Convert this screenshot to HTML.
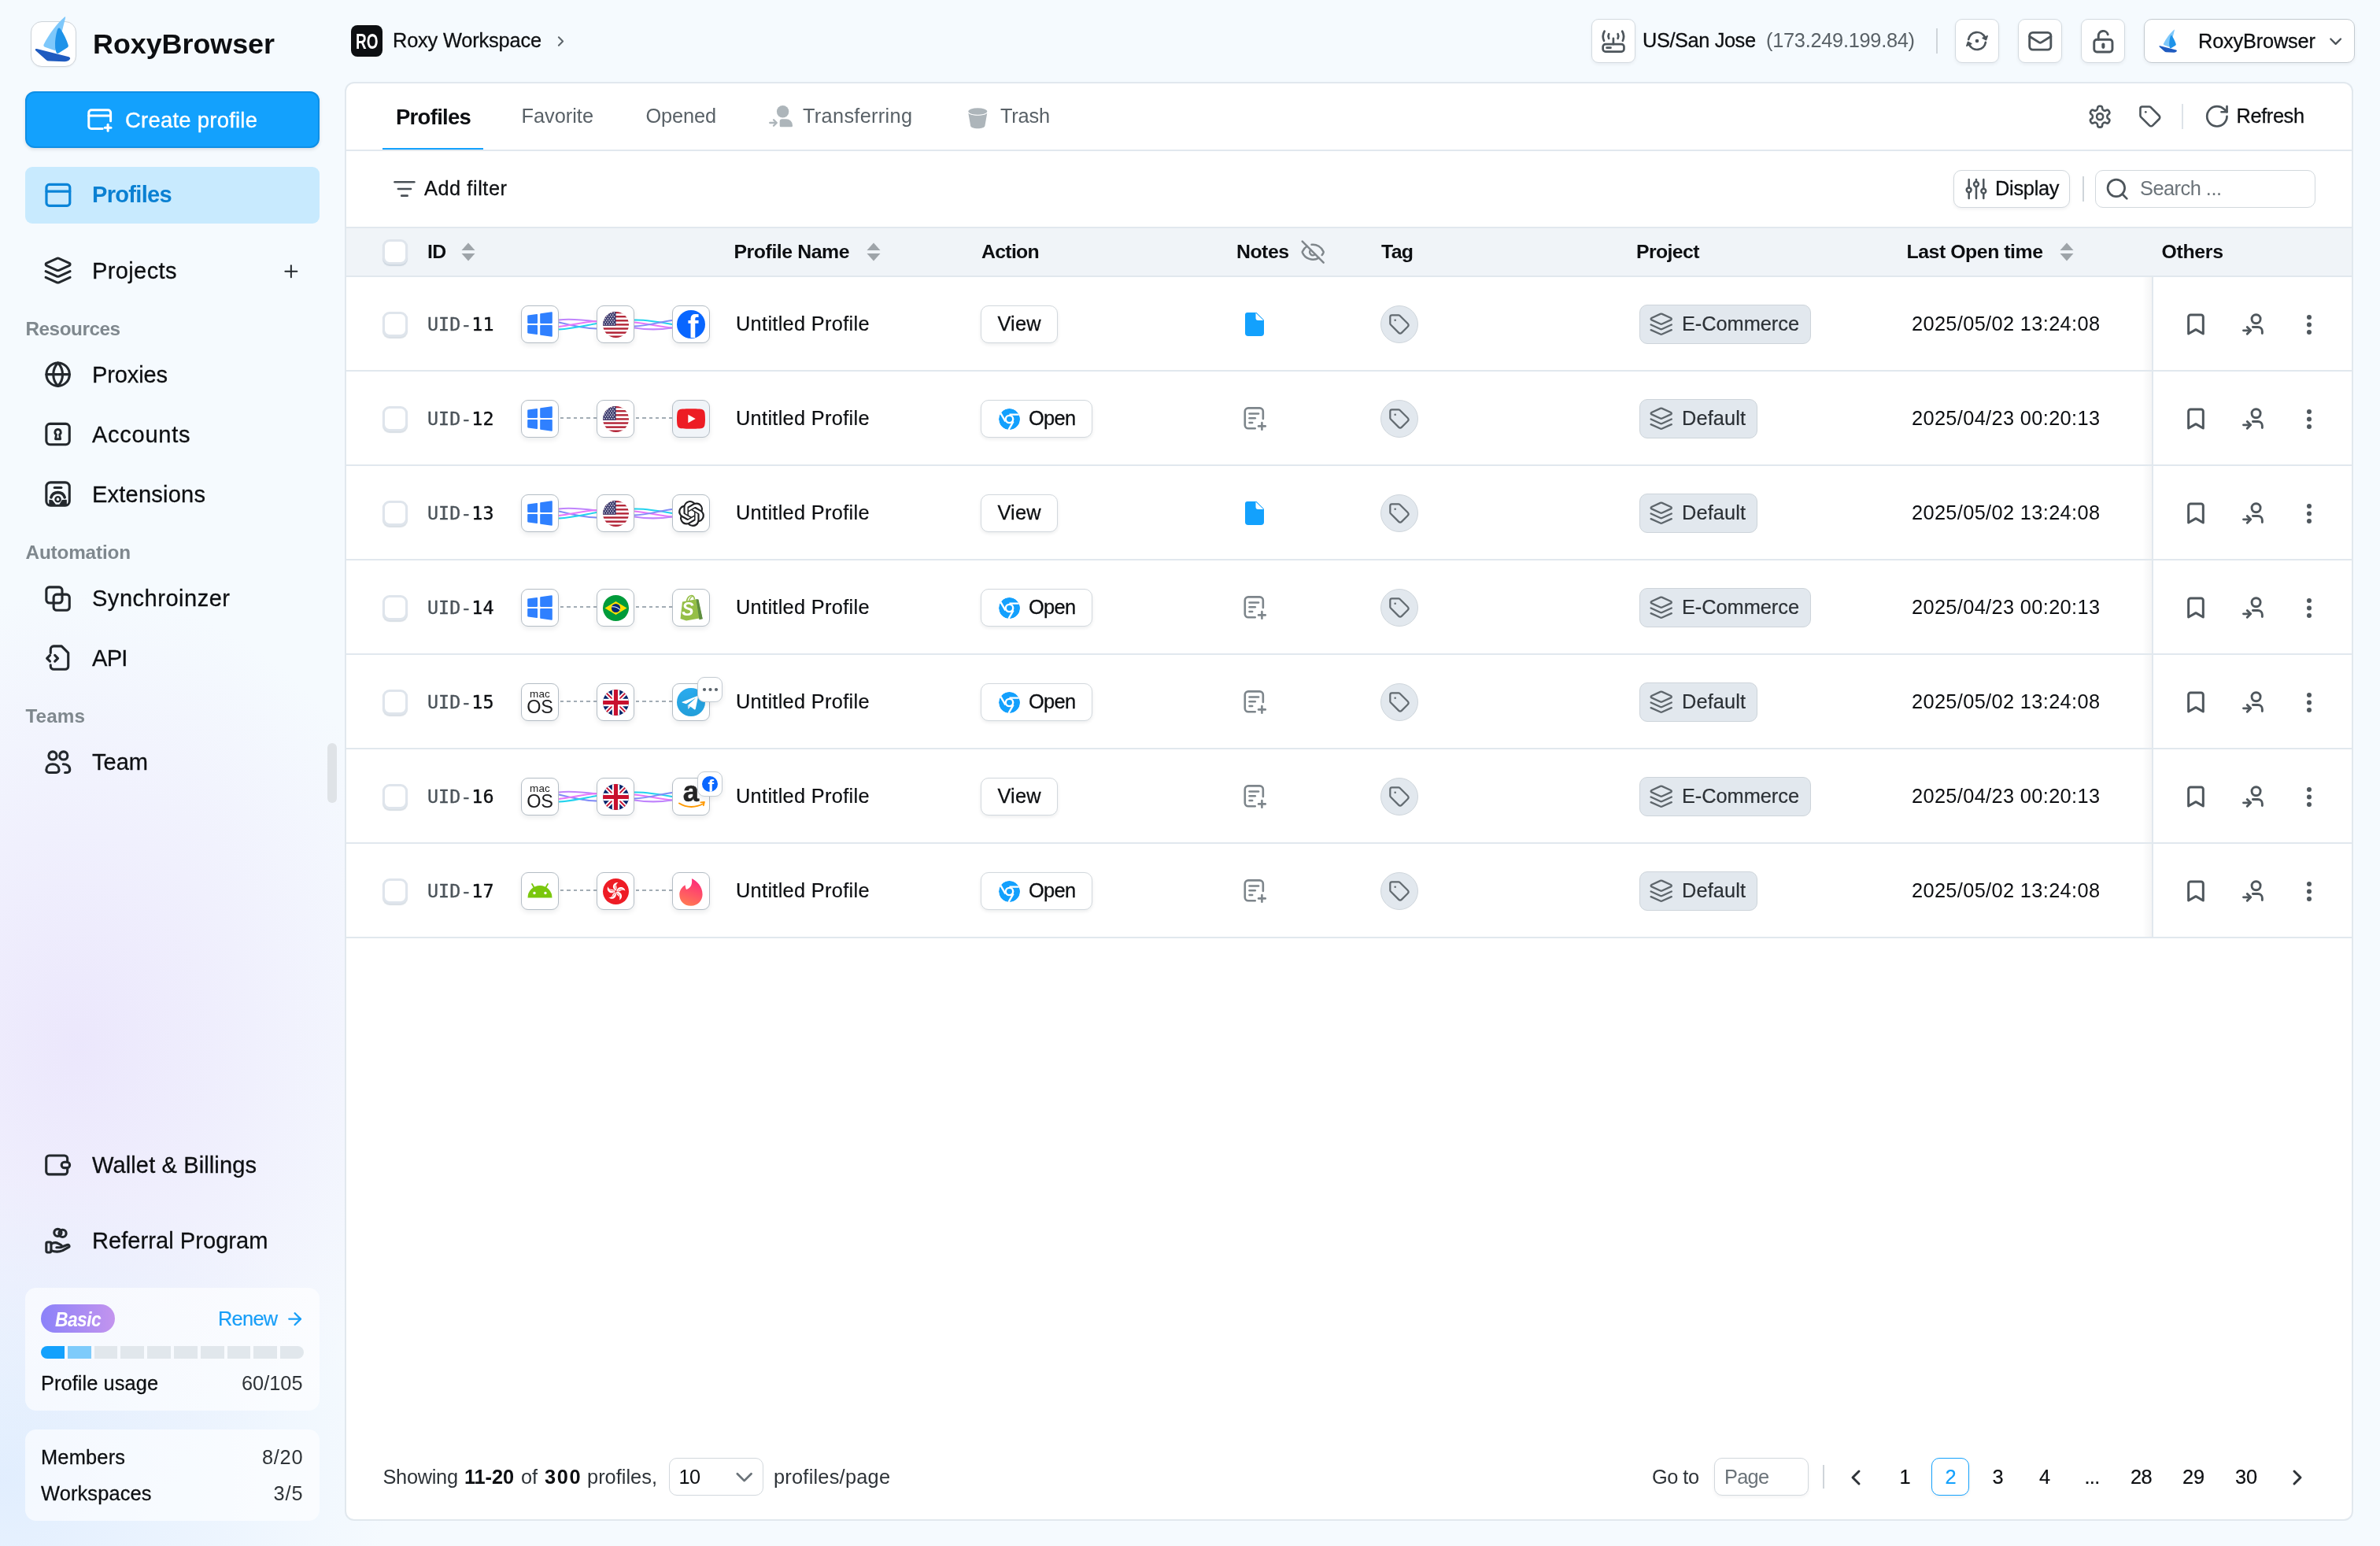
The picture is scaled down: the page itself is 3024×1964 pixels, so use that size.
<!DOCTYPE html><html lang="en"><head><meta charset="utf-8"><title>RoxyBrowser - Profiles</title><style>
html,body{margin:0;padding:0}
body{width:3024px;height:1964px;overflow:hidden;position:relative;font-family:"Liberation Sans", sans-serif;
background:
 radial-gradient(ellipse 620px 480px at 0px 1880px, rgba(224,237,254,.95), rgba(224,237,254,0) 80%),
 radial-gradient(ellipse 600px 740px at 100px 1330px, rgba(235,230,252,.95), rgba(235,230,252,0) 78%),
 #f5fafe;}
i{display:block}
#app{position:absolute;left:0;top:0;width:3024px;height:1964px;will-change:transform}
</style></head><body><div id="app">
<div style="position:absolute;left:39px;top:27px;width:58px;height:58px;background:#fff;border:1.5px solid #cdd3d9;border-radius:14px;box-sizing:border-box;box-shadow:0 1px 2px rgba(16,24,40,.05)"></div>
<svg style="position:absolute;left:44px;top:20px;overflow:visible" width="46" height="59" viewBox="44 20 46 59"><path d="M82.200 21.500Q83.600 20.400 83 23L79 39 70.500 64.500 57 59.800Q54.300 58.500 56 55.800C62 44 72 30 82.200 21.500Z" fill="#7ec8fb"/><path d="M73.500 36.500Q75 34.300 76.600 36.500C81 43 85 51 86.800 57.500Q87.300 59.600 85.500 60.600L74.500 67.500Q72.400 68.600 71.400 66.500 69.600 62 70 55C70.300 49 71.500 41 73.500 36.500Z" fill="#1e93e9"/><path d="M46.800 62 87.500 72.300Q90.200 73.500 88.600 75.600 86.500 78.300 82 78.300L62 77.600Q60 77.500 58.500 76L45.300 64.200Q43.800 61.400 46.800 62Z" fill="#1f5bc0"/></svg>
<span id="t0" style="position:absolute;left:118px;top:38.15px;font-size:35.94px;line-height:35.94px;font-weight:700;color:#0d0f12;white-space:nowrap;letter-spacing:-0.059px;">RoxyBrowser</span>
<div style="position:absolute;left:32px;top:116px;width:374px;height:72px;background:#13a1fd;border:2px solid #0e8fe6;border-radius:12px;box-sizing:border-box;box-shadow:0 2px 4px rgba(16,24,40,.12)"></div>
<svg style="position:absolute;left:109.72px;top:134.68px;overflow:visible" width="33.37" height="33.37" viewBox="0 0 24 24" fill="none" stroke="#fff" stroke-width="2.158" stroke-linecap="round" stroke-linejoin="round" color="#fff"><path d="M22 13.500V5.900a2.400 2.400 0 0 0-2.400-2.400H4.400a2.400 2.400 0 0 0-2.400 2.400v12.200a2.400 2.400 0 0 0 2.400 2.400h10.100"/><path d="M2 8.700h20"/><path d="M19.500 16.800v5.600"/><path d="M16.700 19.600h5.600"/></svg>
<span id="t1" style="position:absolute;left:159px;top:139.34px;font-size:27.48px;line-height:27.48px;font-weight:400;color:#fff;white-space:nowrap;letter-spacing:0.238px;-webkit-text-stroke:0.35px #fff;">Create profile</span>
<div style="position:absolute;left:32px;top:212px;width:374px;height:72px;background:#c8eafe;border-radius:9px"></div>
<svg style="position:absolute;left:56.12px;top:230.37px;overflow:visible" width="35.76" height="35.76" viewBox="0 0 24 24" fill="none" stroke="#0a84d8" stroke-width="2.148" stroke-linecap="round" stroke-linejoin="round" color="#0a84d8"><rect x="2" y="3" width="20" height="18" rx="2.400"/><path d="M2 8.800h20"/></svg>
<span id="t2" style="position:absolute;left:117px;top:233.49px;font-size:29.07px;line-height:29.07px;font-weight:700;color:#0a80d2;white-space:nowrap;letter-spacing:-0.700px;">Profiles</span>
<svg style="position:absolute;left:55.4px;top:325.48px;overflow:visible" width="37.2" height="37.2" viewBox="0 0 24 24" fill="none" stroke="#23282d" stroke-width="1.935" stroke-linecap="round" stroke-linejoin="round" color="#23282d"><path d="m12.83 2.18a2 2 0 0 0-1.66 0L2.6 6.08a1 1 0 0 0 0 1.83l8.58 3.91a2 2 0 0 0 1.66 0l8.58-3.9a1 1 0 0 0 0-1.83Z"/><path d="m22 17.65-9.17 4.16a2 2 0 0 1-1.66 0L2 17.65"/><path d="m22 12.65-9.17 4.16a2 2 0 0 1-1.66 0L2 12.65"/></svg>
<span id="t3" style="position:absolute;left:117px;top:329.99px;font-size:29.07px;line-height:29.07px;font-weight:400;color:#0d0f12;white-space:nowrap;letter-spacing:0.359px;-webkit-text-stroke:0.28px #0d0f12;">Projects</span>
<svg style="position:absolute;left:357.14px;top:331.64px;overflow:visible" width="25.71" height="25.71" viewBox="0 0 24 24" fill="none" stroke="#23282d" stroke-width="1.867" stroke-linecap="round" stroke-linejoin="round" color="#23282d"><path d="M5 12h14"/><path d="M12 5v14"/></svg>
<span id="t4" style="position:absolute;left:32.5px;top:405.54px;font-size:24.31px;line-height:24.31px;font-weight:700;color:#7f888e;white-space:nowrap;letter-spacing:-0.469px;">Resources</span>
<span id="t5" style="position:absolute;left:32.5px;top:690.04px;font-size:24.31px;line-height:24.31px;font-weight:700;color:#7f888e;white-space:nowrap;letter-spacing:-0.163px;">Automation</span>
<span id="t6" style="position:absolute;left:32.5px;top:898.04px;font-size:24.31px;line-height:24.31px;font-weight:700;color:#7f888e;white-space:nowrap;letter-spacing:0.078px;">Teams</span>
<svg style="position:absolute;left:56.11px;top:458.36px;overflow:visible" width="35.28" height="35.28" viewBox="0 0 24 24" fill="none" stroke="#23282d" stroke-width="2.109" stroke-linecap="round" stroke-linejoin="round" color="#23282d"><circle cx="12" cy="12" r="10"/><path d="M12 2a14.5 14.5 0 0 0 0 20 14.5 14.5 0 0 0 0-20"/><path d="M2 12h20"/></svg>
<span id="t7" style="position:absolute;left:117px;top:461.69px;font-size:29.07px;line-height:29.07px;font-weight:400;color:#0d0f12;white-space:nowrap;letter-spacing:-0.154px;-webkit-text-stroke:0.28px #0d0f12;">Proxies</span>
<svg style="position:absolute;left:55.18px;top:532.93px;overflow:visible" width="37.14" height="37.14" viewBox="0 0 24 24" fill="none" stroke="#23282d" stroke-width="2.003" stroke-linecap="round" stroke-linejoin="round" color="#23282d"><rect x="2.5" y="3.5" width="19" height="17" rx="3"/><path d="M12 8a2.4 2.4 0 0 0-1.3 4.4L10 16h4l-.7-3.600A2.4 2.400 0 0 0 12 8Z" stroke-width="1.8"/></svg>
<span id="t8" style="position:absolute;left:117px;top:537.69px;font-size:29.07px;line-height:29.07px;font-weight:400;color:#0d0f12;white-space:nowrap;letter-spacing:0.708px;-webkit-text-stroke:0.28px #0d0f12;">Accounts</span>
<svg style="position:absolute;left:55.18px;top:609.43px;overflow:visible" width="37.14" height="37.14" viewBox="0 0 24 24" fill="none" stroke="#23282d" stroke-width="2.003" stroke-linecap="round" stroke-linejoin="round" color="#23282d"><rect x="2.500" y="2.500" width="19" height="19" rx="3.500"/><path d="M9.200 6.800h5.600"/><circle cx="12" cy="16.300" r="2" stroke-width="1.600"/><path d="M6.400 14.800a5.900 5.900 0 0 1 11.200 0" stroke-width="2.300"/><path d="M5.200 17.200 7.200 17.400 9.800 20.800H5.200Z" fill="currentColor" stroke-width="1"/><path d="M15.800 17.300 18.800 17.200V20.800H13.600Z" fill="currentColor" stroke-width="1"/></svg>
<span id="t9" style="position:absolute;left:117px;top:613.69px;font-size:29.07px;line-height:29.07px;font-weight:400;color:#0d0f12;white-space:nowrap;letter-spacing:0.203px;-webkit-text-stroke:0.28px #0d0f12;">Extensions</span>
<svg style="position:absolute;left:55.18px;top:741.68px;overflow:visible" width="37.14" height="37.14" viewBox="0 0 24 24" fill="none" stroke="#23282d" stroke-width="2.003" stroke-linecap="round" stroke-linejoin="round" color="#23282d"><rect x="2.500" y="2.500" width="13" height="13" rx="2.500"/><rect x="8.500" y="8.500" width="13" height="13" rx="2.500"/></svg>
<span id="t10" style="position:absolute;left:117px;top:745.69px;font-size:29.07px;line-height:29.07px;font-weight:400;color:#0d0f12;white-space:nowrap;letter-spacing:0.490px;-webkit-text-stroke:0.28px #0d0f12;">Synchroinzer</span>
<svg style="position:absolute;left:55.07px;top:817.18px;overflow:visible" width="37.14" height="37.14" viewBox="0 0 24 24" fill="none" stroke="#23282d" stroke-width="2.003" stroke-linecap="round" stroke-linejoin="round" color="#23282d"><path d="M6 8V5a2.500 2.500 0 0 1 2.500-2.500h6.500l5.500 5.500v11a2.500 2.500 0 0 1-2.500 2.500h-9.500a2.500 2.500 0 0 1-2.500-2.500v-1"/><path d="m5.500 10-2.500 2.500 2.500 2.500"/><path d="m9.500 10 2.500 2.500-2.500 2.500"/></svg>
<span id="t11" style="position:absolute;left:117px;top:821.69px;font-size:29.07px;line-height:29.07px;font-weight:400;color:#0d0f12;white-space:nowrap;letter-spacing:-0.700px;-webkit-text-stroke:0.28px #0d0f12;">API</span>
<svg style="position:absolute;left:55.22px;top:950.33px;overflow:visible" width="36.8" height="36.8" viewBox="0 0 24 24" fill="none" stroke="#23282d" stroke-width="2.022" stroke-linecap="round" stroke-linejoin="round" color="#23282d"><circle cx="7.800" cy="6.500" r="3.300"/><circle cx="16.800" cy="6.500" r="3.300"/><path d="M2.500 18.200c0-3 2.300-4.700 5.300-4.700s5.300 1.700 5.300 4.700c0 1.300-1 2.300-2.300 2.300h-6c-1.300 0-2.300-1-2.300-2.300Z"/><path d="M16.500 13.500c3 0 5.500 1.700 5.500 4.700 0 1.300-1 2.300-2.300 2.300h-1.700"/></svg>
<span id="t12" style="position:absolute;left:117px;top:953.69px;font-size:29.07px;line-height:29.07px;font-weight:400;color:#0d0f12;white-space:nowrap;letter-spacing:-0.026px;-webkit-text-stroke:0.28px #0d0f12;">Team</span>
<svg style="position:absolute;left:55.31px;top:1461.56px;overflow:visible" width="35.88" height="35.88" viewBox="0 0 24 24" fill="none" stroke="#23282d" stroke-width="2.074" stroke-linecap="round" stroke-linejoin="round" color="#23282d"><path d="M20.500 9.500v-3a2.500 2.500 0 0 0-2.500-2.500h-13a2.500 2.500 0 0 0-2.500 2.500v11a2.500 2.500 0 0 0 2.500 2.500h13a2.500 2.500 0 0 0 2.500-2.500v-3"/><rect x="15.500" y="9.500" width="7" height="5" rx="2.500"/></svg>
<span id="t13" style="position:absolute;left:117px;top:1465.69px;font-size:29.07px;line-height:29.07px;font-weight:400;color:#0d0f12;white-space:nowrap;letter-spacing:0.107px;-webkit-text-stroke:0.28px #0d0f12;">Wallet &amp; Billings</span>
<svg style="position:absolute;left:55.22px;top:1558.08px;overflow:visible" width="36.8" height="36.8" viewBox="0 0 24 24" fill="none" stroke="#23282d" stroke-width="2.022" stroke-linecap="round" stroke-linejoin="round" color="#23282d"><circle cx="12" cy="5.200" r="3"/><circle cx="16" cy="5.800" r="3"/><rect x="2.500" y="13" width="4" height="8.500" rx="1.200"/><path d="M6.500 14.500c2-1.200 4-1.400 5.800-.4l2.200 1.100c1.200.6.800 2.200-.5 2.200h-3"/><path d="M6.500 20c3 1.200 6.500 1.300 9.500 0l5-2.800c1-.6.500-2.400-1.200-1.900l-4.300 1.700"/></svg>
<span id="t14" style="position:absolute;left:117px;top:1561.69px;font-size:29.07px;line-height:29.07px;font-weight:400;color:#0d0f12;white-space:nowrap;letter-spacing:0.041px;-webkit-text-stroke:0.28px #0d0f12;">Referral Program</span>
<div style="position:absolute;left:416px;top:944px;width:12px;height:76px;background:#dfe3e7;border-radius:6px"></div>
<div style="position:absolute;left:32px;top:1636px;width:374px;height:156px;background:rgba(255,255,255,.62);border-radius:14px"></div>
<div style="position:absolute;left:52px;top:1657px;width:94px;height:36px;background:linear-gradient(90deg,#8b82f9,#c394ee);border-radius:18px"></div>
<span id="t15" style="position:absolute;left:69.5px;top:1663.64px;font-size:25.37px;line-height:25.37px;font-weight:700;color:#fff;white-space:nowrap;letter-spacing:0.000px;font-style:italic;transform:scaleX(.9);transform-origin:0 50%;letter-spacing:-0.6px;">Basic</span>
<span id="t16" style="position:absolute;left:277px;top:1663.14px;font-size:25.37px;line-height:25.37px;font-weight:400;color:#189ef7;white-space:nowrap;letter-spacing:-0.700px;-webkit-text-stroke:0.2px #189ef7;">Renew</span>
<svg style="position:absolute;left:361.9px;top:1662.9px;overflow:visible" width="25.2" height="25.2" viewBox="0 0 24 24" fill="none" stroke="#189ef7" stroke-width="2.19" stroke-linecap="round" stroke-linejoin="round" color="#189ef7"><path d="M5 12h14"/><path d="m12 5 7 7-7 7"/></svg>
<div style="position:absolute;left:52px;top:1710px;width:334px;height:16px;display:flex;gap:4px;border-radius:8px;overflow:hidden"><i style="flex:1;background:#13a1fd"></i><i style="flex:1;background:#7ecbfb"></i><i style="flex:1;background:#e1e7ec"></i><i style="flex:1;background:#e1e7ec"></i><i style="flex:1;background:#e1e7ec"></i><i style="flex:1;background:#e1e7ec"></i><i style="flex:1;background:#e1e7ec"></i><i style="flex:1;background:#e1e7ec"></i><i style="flex:1;background:#e1e7ec"></i><i style="flex:1;background:#e1e7ec"></i></div>
<span id="t17" style="position:absolute;left:52px;top:1744.64px;font-size:25.37px;line-height:25.37px;font-weight:400;color:#0d0f12;white-space:nowrap;letter-spacing:0.081px;-webkit-text-stroke:0.28px #0d0f12;">Profile usage</span>
<span id="t18" style="position:absolute;left:307px;top:1744.64px;font-size:25.37px;line-height:25.37px;font-weight:400;color:#2e3338;white-space:nowrap;letter-spacing:-0.016px;">60/105</span>
<div style="position:absolute;left:32px;top:1816px;width:374px;height:116px;background:rgba(255,255,255,.62);border-radius:14px"></div>
<span id="t19" style="position:absolute;left:52px;top:1839.14px;font-size:25.37px;line-height:25.37px;font-weight:400;color:#0d0f12;white-space:nowrap;letter-spacing:0.219px;-webkit-text-stroke:0.28px #0d0f12;">Members</span>
<span id="t20" style="position:absolute;left:333px;top:1839.14px;font-size:25.37px;line-height:25.37px;font-weight:400;color:#2e3338;white-space:nowrap;letter-spacing:0.714px;">8/20</span>
<span id="t21" style="position:absolute;left:52px;top:1884.64px;font-size:25.37px;line-height:25.37px;font-weight:400;color:#0d0f12;white-space:nowrap;letter-spacing:0.160px;-webkit-text-stroke:0.28px #0d0f12;">Workspaces</span>
<span id="t22" style="position:absolute;left:347.5px;top:1884.64px;font-size:25.37px;line-height:25.37px;font-weight:400;color:#2e3338;white-space:nowrap;letter-spacing:0.867px;">3/5</span>
<div style="position:absolute;left:446px;top:32px;width:40px;height:40px;background:#0d0f12;border-radius:8px"></div>
<span id="t23" style="position:absolute;left:452px;top:39.34px;font-size:27.48px;line-height:27.48px;font-weight:700;color:#fff;white-space:nowrap;letter-spacing:0.000px;transform:scaleX(.69);transform-origin:0 0;">RO</span>
<span id="t24" style="position:absolute;left:499px;top:39.14px;font-size:25.37px;line-height:25.37px;font-weight:400;color:#0d0f12;white-space:nowrap;letter-spacing:-0.169px;-webkit-text-stroke:0.28px #0d0f12;">Roxy Workspace</span>
<svg style="position:absolute;left:701.5px;top:41.75px;overflow:visible" width="21.0" height="21.0" viewBox="0 0 24 24" fill="none" stroke="#5c646a" stroke-width="2.286" stroke-linecap="round" stroke-linejoin="round" color="#5c646a"><path d="m9 18 6-6-6-6"/></svg>
<div style="position:absolute;left:2022px;top:24px;width:56px;height:56px;background:#fff;border:1.5px solid #d3dae0;border-radius:9px;box-sizing:border-box;box-shadow:0 2px 4px rgba(16,24,40,.06)"></div>
<svg style="position:absolute;left:2035px;top:37px;overflow:visible" width="30" height="30" viewBox="0 0 30 30" fill="none" stroke="#4d555b" stroke-width="2.7" stroke-linecap="round" stroke-linejoin="round" ><rect x="1.650" y="19.150" width="26.800" height="9.400" rx="3.200"/><path d="M6.600 23.700h4.900"/><path d="M14.900 11.800v7.300"/><path d="M9.200 6.100A6.400 6.400 0 0 0 9.200 11.900"/><path d="M20.600 6.100A6.400 6.400 0 0 1 20.600 11.900"/><path d="M3.600 2.700A13.250 13.250 0 0 0 3 14.800"/><path d="M26.200 2.700A13.250 13.250 0 0 1 26.800 14.800"/></svg>
<span id="t25" style="position:absolute;left:2087px;top:39.14px;font-size:25.37px;line-height:25.37px;font-weight:400;color:#0d0f12;white-space:nowrap;letter-spacing:-0.402px;-webkit-text-stroke:0.28px #0d0f12;">US/San Jose</span>
<span id="t26" style="position:absolute;left:2244px;top:39.14px;font-size:25.37px;line-height:25.37px;font-weight:400;color:#596167;white-space:nowrap;letter-spacing:-0.278px;">(173.249.199.84)</span>
<div style="position:absolute;left:2460px;top:36px;width:2px;height:32px;background:#cfd5da"></div>
<div style="position:absolute;left:2484px;top:24px;width:56px;height:56px;background:#fff;border:1.5px solid #d3dae0;border-radius:9px;box-sizing:border-box;box-shadow:0 2px 4px rgba(16,24,40,.06)"></div>
<svg style="position:absolute;left:2498px;top:38px;overflow:visible" width="28" height="28" viewBox="-14 -14 28 28" fill="none" stroke="#4d555b" stroke-width="2.7" stroke-linecap="round" stroke-linejoin="round" ><path d="M-10.830-1.910A11 11 0 0 1 9.970-4.650"/><path d="M10.830 1.910A11 11 0 0 1-9.970 4.650"/><path d="M11.600-1.200 13.300-6.400 7-3.600Z" fill="#4d555b" stroke-width="1.400"/><path d="M-11.600 1.200-13.300 6.400-7 3.600Z" fill="#4d555b" stroke-width="1.400"/><circle cx="0" cy="0" r="2.300" fill="#4d555b" stroke="none"/></svg>
<div style="position:absolute;left:2564px;top:24px;width:56px;height:56px;background:#fff;border:1.5px solid #d3dae0;border-radius:9px;box-sizing:border-box;box-shadow:0 2px 4px rgba(16,24,40,.06)"></div>
<svg style="position:absolute;left:2575.74px;top:35.74px;overflow:visible" width="32.52" height="32.52" viewBox="0 0 24 24" fill="none" stroke="#4d555b" stroke-width="2.14" stroke-linecap="round" stroke-linejoin="round" color="#4d555b"><rect width="20" height="16" x="2" y="4" rx="3"/><path d="m22 7.500-8.970 5.700a1.940 1.940 0 0 1-2.060 0L2 7.500"/></svg>
<div style="position:absolute;left:2644px;top:24px;width:56px;height:56px;background:#fff;border:1.5px solid #d3dae0;border-radius:9px;box-sizing:border-box;box-shadow:0 2px 4px rgba(16,24,40,.06)"></div>
<svg style="position:absolute;left:2655.88px;top:35.54px;overflow:visible" width="32.74" height="32.74" viewBox="0 0 24 24" fill="none" stroke="#4d555b" stroke-width="2.126" stroke-linecap="round" stroke-linejoin="round" color="#4d555b"><rect width="17" height="11.500" x="3.500" y="10.500" rx="2.500"/><path d="M7.500 10.500V7a4.500 4.500 0 0 1 8.800-1.300"/><path d="M12 15v2.500" stroke-width="3"/></svg>
<div style="position:absolute;left:2724px;top:24px;width:268px;height:56px;background:#fff;border:1.5px solid #c3cad0;border-radius:10px;box-sizing:border-box;box-shadow:0 2px 4px rgba(16,24,40,.06)"></div>
<svg style="position:absolute;left:2743px;top:37px;overflow:visible" width="23.4" height="30" viewBox="44 20 46 59"><path d="M82.200 21.500Q83.600 20.400 83 23L79 39 70.500 64.500 57 59.800Q54.300 58.500 56 55.800C62 44 72 30 82.200 21.500Z" fill="#7ec8fb"/><path d="M73.500 36.500Q75 34.300 76.600 36.500C81 43 85 51 86.800 57.500Q87.300 59.600 85.500 60.600L74.500 67.500Q72.400 68.600 71.400 66.500 69.600 62 70 55C70.300 49 71.500 41 73.500 36.500Z" fill="#1e93e9"/><path d="M46.800 62 87.500 72.300Q90.200 73.500 88.600 75.600 86.500 78.300 82 78.300L62 77.600Q60 77.500 58.500 76L45.300 64.200Q43.800 61.400 46.800 62Z" fill="#1f5bc0"/></svg>
<span id="t27" style="position:absolute;left:2793px;top:40.14px;font-size:25.37px;line-height:25.37px;font-weight:400;color:#0d0f12;white-space:nowrap;letter-spacing:-0.180px;-webkit-text-stroke:0.28px #0d0f12;">RoxyBrowser</span>
<svg style="position:absolute;left:2955.3px;top:40.05px;overflow:visible" width="25.4" height="25.4" viewBox="0 0 24 24" fill="none" stroke="#4a5157" stroke-width="2.173" stroke-linecap="round" stroke-linejoin="round" color="#4a5157"><path d="m6 9 6 6 6-6"/></svg>
<div style="position:absolute;left:438px;top:104px;width:2552px;height:1828px;background:#fff;border:2px solid #e1e8ee;border-radius:12px;box-sizing:border-box"></div>
<span id="t28" style="position:absolute;left:503px;top:135.34px;font-size:27.48px;line-height:27.48px;font-weight:700;color:#0d0f12;white-space:nowrap;letter-spacing:-0.700px;">Profiles</span>
<div style="position:absolute;left:486px;top:188px;width:128px;height:3px;background:#13a1fd"></div>
<div style="position:absolute;left:440px;top:190px;width:2548px;height:2px;background:#e1e8ee"></div>
<div style="position:absolute;left:486px;top:187.5px;width:128px;height:2.5px;background:#13a1fd"></div>
<span id="t29" style="position:absolute;left:662.5px;top:135.14px;font-size:25.37px;line-height:25.37px;font-weight:400;color:#596167;white-space:nowrap;letter-spacing:-0.016px;">Favorite</span>
<span id="t30" style="position:absolute;left:820.5px;top:135.14px;font-size:25.37px;line-height:25.37px;font-weight:400;color:#596167;white-space:nowrap;letter-spacing:-0.150px;">Opened</span>
<svg style="position:absolute;left:977px;top:134px;overflow:visible" width="30" height="27.2" viewBox="0 0 30 27.200" fill="none"  ><circle cx="17.600" cy="7.700" r="7.700" fill="#adb5ba"/><path d="M13.700 20.200a3 3 0 0 1 3-3h5.300a8 8 0 0 1 8 8v0.500a1.500 1.500 0 0 1-1.500 1.500h-13.300a1.500 1.500 0 0 1-1.500-1.500Z" fill="#adb5ba"/><path d="M1.200 22h8.300M6 18.200l3.800 3.800-3.800 3.800" fill="none" stroke="#adb5ba" stroke-width="2.300" stroke-linecap="round" stroke-linejoin="round"/></svg>
<span id="t31" style="position:absolute;left:1020px;top:135.14px;font-size:25.37px;line-height:25.37px;font-weight:400;color:#596167;white-space:nowrap;letter-spacing:0.294px;">Transferring</span>
<svg style="position:absolute;left:1229.7px;top:136.5px;overflow:visible" width="24.6" height="26.5" viewBox="0 0 24.600 26.500" fill="none"  ><path d="M0.300 6.500 3.200 23c.5 2 4.200 3.200 9.100 3.200s8.600-1.200 9.100-3.200L24.300 6.500c-1.500 1.800-6 3-12 3s-10.500-1.200-12-3Z" fill="#adb5ba"/><ellipse cx="12.300" cy="4.600" rx="12" ry="4.300" fill="#adb5ba"/><path d="M0.300 5.800c1.500 2.200 6 3.400 12 3.400s10.500-1.200 12-3.400" fill="none" stroke="#fff" stroke-width="0.900"/></svg>
<span id="t32" style="position:absolute;left:1271px;top:135.14px;font-size:25.37px;line-height:25.37px;font-weight:400;color:#596167;white-space:nowrap;letter-spacing:-0.223px;">Trash</span>
<svg style="position:absolute;left:2652.11px;top:132.11px;overflow:visible" width="32.28" height="32.28" viewBox="0 0 24 24" fill="none" stroke="#4d555b" stroke-width="1.933" stroke-linecap="round" stroke-linejoin="round" color="#4d555b"><path d="M12.220 2h-.440a2 2 0 0 0-2 2v.180a2 2 0 0 1-1 1.730l-.430.250a2 2 0 0 1-2 0l-.150-.080a2 2 0 0 0-2.730.730l-.220.380a2 2 0 0 0 .730 2.730l.150.100a2 2 0 0 1 1 1.720v.510a2 2 0 0 1-1 1.740l-.150.090a2 2 0 0 0-.730 2.730l.220.380a2 2 0 0 0 2.730.730l.150-.080a2 2 0 0 1 2 0l.430.250a2 2 0 0 1 1 1.730V20a2 2 0 0 0 2 2h.440a2 2 0 0 0 2-2v-.180a2 2 0 0 1 1-1.730l.430-.250a2 2 0 0 1 2 0l.150.080a2 2 0 0 0 2.730-.730l.220-.390a2 2 0 0 0-.730-2.730l-.150-.080a2 2 0 0 1-1-1.740v-.500a2 2 0 0 1 1-1.740l.150-.090a2 2 0 0 0 .730-2.730l-.220-.380a2 2 0 0 0-2.730-.730l-.150.080a2 2 0 0 1-2 0l-.430-.250a2 2 0 0 1-1-1.730V4a2 2 0 0 0-2-2z"/><circle cx="12" cy="12" r="3"/></svg>
<svg style="position:absolute;left:2717.32px;top:133.32px;overflow:visible" width="29.73" height="29.73" viewBox="0 0 24 24" fill="none" stroke="#4d555b" stroke-width="2.099" stroke-linecap="round" stroke-linejoin="round" color="#4d555b"><path d="M12.586 2.586A2 2 0 0 0 11.172 2H4a2 2 0 0 0-2 2v7.172a2 2 0 0 0 .586 1.414l8.704 8.704a2.426 2.426 0 0 0 3.420 0l6.580-6.580a2.426 2.426 0 0 0 0-3.420z"/><circle cx="7.500" cy="7.500" r="1.100" fill="currentColor" stroke="none"/></svg>
<div style="position:absolute;left:2772px;top:132px;width:2px;height:32px;background:#dde3e8"></div>
<svg style="position:absolute;left:2800.13px;top:130.88px;overflow:visible" width="33.73" height="33.73" viewBox="0 0 24 24" fill="none" stroke="#4d555b" stroke-width="1.921" stroke-linecap="round" stroke-linejoin="round" color="#4d555b"><path d="M21 12a9 9 0 1 1-9-9c2.520 0 4.930 1 6.740 2.740L21 8"/><path d="M21 3v5h-5"/></svg>
<span id="t33" style="position:absolute;left:2841.5px;top:135.14px;font-size:25.37px;line-height:25.37px;font-weight:400;color:#0d0f12;white-space:nowrap;letter-spacing:-0.383px;-webkit-text-stroke:0.28px #0d0f12;">Refresh</span>
<svg style="position:absolute;left:499.31px;top:224.56px;overflow:visible" width="29.88" height="29.88" viewBox="0 0 24 24" fill="none" stroke="#4a5157" stroke-width="2.088" stroke-linecap="round" stroke-linejoin="round" color="#4a5157"><path d="M2 5h20"/><path d="M5.500 12h13"/><path d="M9 19h6"/></svg>
<span id="t34" style="position:absolute;left:539px;top:227.14px;font-size:25.37px;line-height:25.37px;font-weight:400;color:#0d0f12;white-space:nowrap;letter-spacing:0.547px;-webkit-text-stroke:0.28px #0d0f12;">Add filter</span>
<div style="position:absolute;left:2482px;top:216px;width:148px;height:48px;background:#fff;border:1.5px solid #d2d8dd;border-radius:10px;box-sizing:border-box;box-shadow:0 2px 4px rgba(16,24,40,.06)"></div>
<svg style="position:absolute;left:2494.52px;top:224.27px;overflow:visible" width="31.96" height="31.96" viewBox="0 0 24 24" fill="none" stroke="#4d555b" stroke-width="1.878" stroke-linecap="round" stroke-linejoin="round" color="#4d555b"><path d="M5 3v7.500"/><circle cx="5" cy="13" r="2.200"/><path d="M5 15.500v5.500"/><path d="M12 3v2"/><circle cx="12" cy="7.500" r="2.200"/><path d="M12 10v11"/><path d="M19 3v8.500"/><circle cx="19" cy="14" r="2.200"/><path d="M19 16.500v4.500"/></svg>
<span id="t35" style="position:absolute;left:2535px;top:226.64px;font-size:25.37px;line-height:25.37px;font-weight:400;color:#0d0f12;white-space:nowrap;letter-spacing:-0.276px;-webkit-text-stroke:0.28px #0d0f12;">Display</span>
<div style="position:absolute;left:2646px;top:224px;width:2px;height:32px;background:#cfd5da"></div>
<div style="position:absolute;left:2662px;top:216px;width:280px;height:48px;background:#fff;border:1.5px solid #d2d8dd;border-radius:10px;box-sizing:border-box;"></div>
<svg style="position:absolute;left:2673.8px;top:223.8px;overflow:visible" width="32.4" height="32.4" viewBox="0 0 24 24" fill="none" stroke="#4d555b" stroke-width="2.0" stroke-linecap="round" stroke-linejoin="round" color="#4d555b"><circle cx="11" cy="11" r="8"/><path d="m21 21-4.300-4.300"/></svg>
<span id="t36" style="position:absolute;left:2719px;top:226.64px;font-size:25.37px;line-height:25.37px;font-weight:400;color:#6b7379;white-space:nowrap;letter-spacing:-0.505px;">Search ...</span>
<div style="position:absolute;left:440px;top:288px;width:2548px;height:64px;background:#f0f4f8;border-top:2px solid #e1e8ee;border-bottom:2px solid #e1e8ee;box-sizing:border-box"></div>
<div style="position:absolute;left:486px;top:304px;width:32px;height:32px;background:#fff;border:3px solid #dfe5ec;border-radius:9px;box-sizing:border-box;box-shadow:0 1.5px 1px rgba(120,140,160,.28)"></div>
<span id="t37" style="position:absolute;left:543px;top:307.59px;font-size:24.84px;line-height:24.84px;font-weight:700;color:#0d0f12;white-space:nowrap;letter-spacing:-0.700px;">ID</span>
<svg style="position:absolute;left:585.5px;top:308px;overflow:visible" width="18" height="24" viewBox="0 0 18 24" fill="none"  ><path d="M9 0.500 17.500 10H0.500Z" fill="#9ea4a9"/><path d="M9 23.500 17.500 14H0.500Z" fill="#9ea4a9"/></svg>
<span id="t38" style="position:absolute;left:932.5px;top:307.59px;font-size:24.84px;line-height:24.84px;font-weight:700;color:#0d0f12;white-space:nowrap;letter-spacing:-0.436px;">Profile Name</span>
<svg style="position:absolute;left:1101px;top:308px;overflow:visible" width="18" height="24" viewBox="0 0 18 24" fill="none"  ><path d="M9 0.500 17.500 10H0.500Z" fill="#9ea4a9"/><path d="M9 23.500 17.500 14H0.500Z" fill="#9ea4a9"/></svg>
<span id="t39" style="position:absolute;left:1247px;top:307.59px;font-size:24.84px;line-height:24.84px;font-weight:700;color:#0d0f12;white-space:nowrap;letter-spacing:-0.700px;">Action</span>
<span id="t40" style="position:absolute;left:1571px;top:307.59px;font-size:24.84px;line-height:24.84px;font-weight:700;color:#0d0f12;white-space:nowrap;letter-spacing:-0.496px;">Notes</span>
<svg style="position:absolute;left:1651.55px;top:303.8px;overflow:visible" width="32.4" height="32.4" viewBox="0 0 24 24" fill="none" stroke="#7f868b" stroke-width="1.852" stroke-linecap="round" stroke-linejoin="round" color="#7f868b"><path d="M10.733 5.076a10.744 10.744 0 0 1 11.205 6.575 1 1 0 0 1 0 .696 10.747 10.747 0 0 1-1.444 2.490"/><path d="M14.084 14.158a3 3 0 0 1-4.242-4.242"/><path d="M17.479 17.499a10.750 10.750 0 0 1-15.417-5.151 1 1 0 0 1 0-.696 10.750 10.750 0 0 1 4.446-5.143"/><path d="m2 2 20 20"/></svg>
<span id="t41" style="position:absolute;left:1755px;top:307.59px;font-size:24.84px;line-height:24.84px;font-weight:700;color:#0d0f12;white-space:nowrap;letter-spacing:-0.648px;">Tag</span>
<span id="t42" style="position:absolute;left:2079px;top:307.59px;font-size:24.84px;line-height:24.84px;font-weight:700;color:#0d0f12;white-space:nowrap;letter-spacing:-0.612px;">Project</span>
<span id="t43" style="position:absolute;left:2422.5px;top:307.59px;font-size:24.84px;line-height:24.84px;font-weight:700;color:#0d0f12;white-space:nowrap;letter-spacing:-0.451px;">Last Open time</span>
<svg style="position:absolute;left:2617px;top:308px;overflow:visible" width="18" height="24" viewBox="0 0 18 24" fill="none"  ><path d="M9 0.500 17.500 10H0.500Z" fill="#9ea4a9"/><path d="M9 23.500 17.500 14H0.500Z" fill="#9ea4a9"/></svg>
<span id="t44" style="position:absolute;left:2746.5px;top:307.59px;font-size:24.84px;line-height:24.84px;font-weight:700;color:#0d0f12;white-space:nowrap;letter-spacing:-0.306px;">Others</span>
<div style="position:absolute;left:440px;top:470px;width:2548px;height:2px;background:#e1e8ee"></div>
<div style="position:absolute;left:486px;top:395.5px;width:32px;height:32px;background:#fff;border:3px solid #dfe5ec;border-radius:9px;box-sizing:border-box;box-shadow:0 1.5px 1px rgba(120,140,160,.28)"></div>
<span id="t45" style="position:absolute;left:543px;top:401.04px;font-size:23.4px;line-height:23.4px;font-weight:400;color:#4d555b;white-space:nowrap;letter-spacing:0.000px;font-family:'DejaVu Sans Mono', 'Liberation Mono', monospace;-webkit-text-stroke:0.35px #4d555b;">UID-</span>
<span id="t46" style="position:absolute;left:599.36px;top:401.04px;font-size:23.4px;line-height:23.4px;font-weight:400;color:#0d0f12;white-space:nowrap;letter-spacing:-0.032px;font-family:'DejaVu Sans Mono', 'Liberation Mono', monospace;-webkit-text-stroke:0.35px #0d0f12;">11</span>
<svg style="position:absolute;left:710px;top:400px" width="48" height="24" viewBox="0 -12 48 24"><path d="M0 -5.500C16 -7.500 32 -5.500 48 -3.500" stroke="#c084fc" stroke-width="2" fill="none"/><path d="M0 -2.500C16 1.500 32 5.500 48 5.500" stroke="#818cf8" stroke-width="2" fill="none"/><path d="M0 3C16 1 32 -3 48 -4" stroke="#e879f9" stroke-width="2" fill="none"/><path d="M0 6.500C16 6 32 2 48 -1" stroke="#22d3ee" stroke-width="2" fill="none"/></svg>
<svg style="position:absolute;left:806px;top:400px" width="48" height="24" viewBox="0 -12 48 24"><path d="M0 -5.500C16 -6 32 -3 48 0" stroke="#22d3ee" stroke-width="2" fill="none"/><path d="M0 -2.500C16 -1 32 3 48 4.500" stroke="#e879f9" stroke-width="2" fill="none"/><path d="M0 2.500C16 2 32 -3 48 -5" stroke="#818cf8" stroke-width="2" fill="none"/><path d="M0 4.500C16 7 32 7 48 4.500" stroke="#c084fc" stroke-width="2" fill="none"/></svg>
<div style="position:absolute;left:662px;top:388px;width:48px;height:48px;background:#fff;border:1.5px solid #b4bdc5;border-radius:9px;box-sizing:border-box;box-shadow:0 3px 6px rgba(16,24,40,.08);"></div>
<div style="position:absolute;left:758px;top:388px;width:48px;height:48px;background:#fff;border:1.5px solid #b4bdc5;border-radius:9px;box-sizing:border-box;box-shadow:0 3px 6px rgba(16,24,40,.08);"></div>
<div style="position:absolute;left:854px;top:388px;width:48px;height:48px;background:#fff;border:1.5px solid #b4bdc5;border-radius:9px;box-sizing:border-box;box-shadow:0 3px 6px rgba(16,24,40,.08);"></div>
<svg style="position:absolute;left:670.0px;top:396.0px;overflow:visible" width="32" height="32" viewBox="0 0 32 32"><g fill="#2f80ff" stroke="#2f80ff" stroke-width="1.6" stroke-linejoin="round"><path d="M1 5.400 12.200 3.800V14.100H1Z"/><path d="M17 3.100 31 1V14.100H17Z"/><path d="M1 17.900H12.200V28.200L1 26.600Z"/><path d="M17 17.900H31V31L17 28.900Z"/></g></svg>
<svg style="position:absolute;left:765.5px;top:395.5px;overflow:visible" width="33" height="33" viewBox="0 0 33 33"><defs><clipPath id="u1"><circle cx="16.500" cy="16.500" r="16.500"/></clipPath></defs><g clip-path="url(#u1)"><rect x="0" y="0.000" width="33" height="2.540" fill="#b22234"/><rect x="0" y="2.538" width="33" height="2.540" fill="#fff"/><rect x="0" y="5.077" width="33" height="2.540" fill="#b22234"/><rect x="0" y="7.615" width="33" height="2.540" fill="#fff"/><rect x="0" y="10.154" width="33" height="2.540" fill="#b22234"/><rect x="0" y="12.692" width="33" height="2.540" fill="#fff"/><rect x="0" y="15.231" width="33" height="2.540" fill="#b22234"/><rect x="0" y="17.770" width="33" height="2.540" fill="#fff"/><rect x="0" y="20.308" width="33" height="2.540" fill="#b22234"/><rect x="0" y="22.846" width="33" height="2.540" fill="#fff"/><rect x="0" y="25.385" width="33" height="2.540" fill="#b22234"/><rect x="0" y="27.924" width="33" height="2.540" fill="#fff"/><rect x="0" y="30.462" width="33" height="2.540" fill="#b22234"/><rect x="0" y="0" width="16.500" height="17.770" fill="#3c3b6e"/><circle cx="1.60" cy="1.60" r="0.75" fill="#fff"/><circle cx="4.80" cy="1.60" r="0.75" fill="#fff"/><circle cx="8.00" cy="1.60" r="0.75" fill="#fff"/><circle cx="11.20" cy="1.60" r="0.75" fill="#fff"/><circle cx="14.40" cy="1.60" r="0.75" fill="#fff"/><circle cx="3.20" cy="3.95" r="0.75" fill="#fff"/><circle cx="6.40" cy="3.95" r="0.75" fill="#fff"/><circle cx="9.60" cy="3.95" r="0.75" fill="#fff"/><circle cx="12.80" cy="3.95" r="0.75" fill="#fff"/><circle cx="1.60" cy="6.30" r="0.75" fill="#fff"/><circle cx="4.80" cy="6.30" r="0.75" fill="#fff"/><circle cx="8.00" cy="6.30" r="0.75" fill="#fff"/><circle cx="11.20" cy="6.30" r="0.75" fill="#fff"/><circle cx="14.40" cy="6.30" r="0.75" fill="#fff"/><circle cx="3.20" cy="8.65" r="0.75" fill="#fff"/><circle cx="6.40" cy="8.65" r="0.75" fill="#fff"/><circle cx="9.60" cy="8.65" r="0.75" fill="#fff"/><circle cx="12.80" cy="8.65" r="0.75" fill="#fff"/><circle cx="1.60" cy="11.00" r="0.75" fill="#fff"/><circle cx="4.80" cy="11.00" r="0.75" fill="#fff"/><circle cx="8.00" cy="11.00" r="0.75" fill="#fff"/><circle cx="11.20" cy="11.00" r="0.75" fill="#fff"/><circle cx="14.40" cy="11.00" r="0.75" fill="#fff"/><circle cx="3.20" cy="13.35" r="0.75" fill="#fff"/><circle cx="6.40" cy="13.35" r="0.75" fill="#fff"/><circle cx="9.60" cy="13.35" r="0.75" fill="#fff"/><circle cx="12.80" cy="13.35" r="0.75" fill="#fff"/><circle cx="1.60" cy="15.70" r="0.75" fill="#fff"/><circle cx="4.80" cy="15.70" r="0.75" fill="#fff"/><circle cx="8.00" cy="15.70" r="0.75" fill="#fff"/><circle cx="11.20" cy="15.70" r="0.75" fill="#fff"/><circle cx="14.40" cy="15.70" r="0.75" fill="#fff"/></g></svg>
<span style="position:absolute;left:860.0px;top:394.0px;width:36px;height:36px;border-radius:50%;background:#0866ff;overflow:hidden"><span style="position:absolute;left:2.52px;top:1.26px;width:36px;text-align:center;font-weight:700;font-size:41.0px;line-height:41.0px;color:#fff">f</span></span>
<span id="t47" style="position:absolute;left:935px;top:399.14px;font-size:25.37px;line-height:25.37px;font-weight:400;color:#0d0f12;white-space:nowrap;letter-spacing:0.305px;-webkit-text-stroke:0.2px #0d0f12;">Untitled Profile</span>
<div style="position:absolute;left:1246px;top:388px;width:98px;height:48px;background:#fff;border:1.5px solid #d2d8dd;border-radius:10px;box-sizing:border-box;box-shadow:0 2px 4px rgba(16,24,40,.08)"></div>
<span id="t48" style="position:absolute;left:1267.5px;top:398.64px;font-size:25.37px;line-height:25.37px;font-weight:400;color:#0d0f12;white-space:nowrap;letter-spacing:0.161px;-webkit-text-stroke:0.28px #0d0f12;">View</span>
<svg style="position:absolute;left:1582px;top:397px;overflow:visible" width="24" height="30" viewBox="0 0 24 30" fill="none"  ><path d="M3 0h11.500l9.500 9.500V26a4 4 0 0 1-4 4H4a4 4 0 0 1-4-4V3a3 3 0 0 1 3-3Z" fill="#13a1fd"/><path d="M13.500 0.500v6.500a3 3 0 0 0 3 3h6.800Z" fill="#fff"/></svg>
<div style="position:absolute;left:1754px;top:388px;width:48px;height:48px;background:#e2e8ee;border:1.5px solid #cfd6dc;border-radius:50%;box-sizing:border-box"></div>
<svg style="position:absolute;left:1764.29px;top:398.29px;overflow:visible" width="27.78" height="27.78" viewBox="0 0 24 24" fill="none" stroke="#626a70" stroke-width="1.901" stroke-linecap="round" stroke-linejoin="round" color="#626a70"><path d="M12.586 2.586A2 2 0 0 0 11.172 2H4a2 2 0 0 0-2 2v7.172a2 2 0 0 0 .586 1.414l8.704 8.704a2.426 2.426 0 0 0 3.420 0l6.580-6.580a2.426 2.426 0 0 0 0-3.420z"/><circle cx="7.500" cy="7.500" r="1.100" fill="currentColor" stroke="none"/></svg>
<div style="position:absolute;left:2083px;top:387px;width:218px;height:50px;background:#e2e8ee;border:1.5px solid #cdd4da;border-radius:10px;box-sizing:border-box"></div>
<svg style="position:absolute;left:2094.53px;top:396.1px;overflow:visible" width="31.44" height="31.44" viewBox="0 0 24 24" fill="none" stroke="#5e666c" stroke-width="1.756" stroke-linecap="round" stroke-linejoin="round" color="#5e666c"><path d="m12.83 2.18a2 2 0 0 0-1.66 0L2.6 6.08a1 1 0 0 0 0 1.83l8.58 3.91a2 2 0 0 0 1.66 0l8.58-3.9a1 1 0 0 0 0-1.83Z"/><path d="m22 17.65-9.17 4.16a2 2 0 0 1-1.66 0L2 17.65"/><path d="m22 12.65-9.17 4.16a2 2 0 0 1-1.66 0L2 12.65"/></svg>
<span id="t49" style="position:absolute;left:2137px;top:399.14px;font-size:25.37px;line-height:25.37px;font-weight:400;color:#2c3136;white-space:nowrap;letter-spacing:-0.040px;-webkit-text-stroke:0.2px #2c3136;">E-Commerce</span>
<span id="t50" style="position:absolute;left:2429px;top:399.14px;font-size:25.37px;line-height:25.37px;font-weight:400;color:#0d0f12;white-space:nowrap;letter-spacing:0.351px;">2025/05/02 13:24:08</span>
<div style="position:absolute;left:2722px;top:352px;width:12px;height:118px;background:linear-gradient(90deg,rgba(16,24,40,0),rgba(16,24,40,.045))"></div>
<div style="position:absolute;left:2734px;top:352px;width:2px;height:118px;background:#e1e8ee"></div>
<svg style="position:absolute;left:2774.25px;top:396.0px;overflow:visible" width="32.0" height="32.0" viewBox="0 0 24 24" fill="none" stroke="#4f575d" stroke-width="2.25" stroke-linecap="round" stroke-linejoin="round" color="#4f575d"><path d="m19 21-7-4-7 4V5a2 2 0 0 1 2-2h10a2 2 0 0 1 2 2v16z"/></svg>
<svg style="position:absolute;left:2847.57px;top:396.18px;overflow:visible" width="30.13" height="30.13" viewBox="0 0 24 24" fill="none" stroke="#4f575d" stroke-width="2.31" stroke-linecap="round" stroke-linejoin="round" color="#4f575d"><circle cx="14.800" cy="7.400" r="4.400"/><path d="M11.500 15.500h5.200a4.300 4.300 0 0 1 4.300 4.300v2.200"/><path d="M2 19h7"/><path d="m5.800 15.500 3.500 3.500-3.500 3.500"/></svg>
<svg style="position:absolute;left:2931px;top:399.5px;overflow:visible" width="6" height="25" viewBox="0 0 6 25" fill="none"  ><circle cx="3" cy="3" r="3" fill="#4f575d"/><circle cx="3" cy="12.500" r="3" fill="#4f575d"/><circle cx="3" cy="22" r="3" fill="#4f575d"/></svg>
<div style="position:absolute;left:440px;top:590px;width:2548px;height:2px;background:#e1e8ee"></div>
<div style="position:absolute;left:486px;top:515.5px;width:32px;height:32px;background:#fff;border:3px solid #dfe5ec;border-radius:9px;box-sizing:border-box;box-shadow:0 1.5px 1px rgba(120,140,160,.28)"></div>
<span id="t51" style="position:absolute;left:543px;top:521.04px;font-size:23.4px;line-height:23.4px;font-weight:400;color:#4d555b;white-space:nowrap;letter-spacing:0.000px;font-family:'DejaVu Sans Mono', 'Liberation Mono', monospace;-webkit-text-stroke:0.35px #4d555b;">UID-</span>
<span id="t52" style="position:absolute;left:599.36px;top:521.04px;font-size:23.4px;line-height:23.4px;font-weight:400;color:#0d0f12;white-space:nowrap;letter-spacing:-0.032px;font-family:'DejaVu Sans Mono', 'Liberation Mono', monospace;-webkit-text-stroke:0.35px #0d0f12;">12</span>
<div style="position:absolute;left:710px;top:529.8px;width:48px;height:1.8px;background:repeating-linear-gradient(90deg,transparent 0 2px,#a3adb5 2px 6.300px,transparent 6.300px 8.300px)"></div>
<div style="position:absolute;left:806px;top:529.8px;width:48px;height:1.8px;background:repeating-linear-gradient(90deg,transparent 0 2px,#a3adb5 2px 6.300px,transparent 6.300px 8.300px)"></div>
<div style="position:absolute;left:662px;top:508px;width:48px;height:48px;background:#fff;border:1.5px solid #b4bdc5;border-radius:9px;box-sizing:border-box;box-shadow:0 3px 6px rgba(16,24,40,.08);"></div>
<div style="position:absolute;left:758px;top:508px;width:48px;height:48px;background:#fff;border:1.5px solid #b4bdc5;border-radius:9px;box-sizing:border-box;box-shadow:0 3px 6px rgba(16,24,40,.08);"></div>
<div style="position:absolute;left:854px;top:508px;width:48px;height:48px;background:#fff;border:1.5px solid #b4bdc5;border-radius:9px;box-sizing:border-box;box-shadow:0 3px 6px rgba(16,24,40,.08);background:#f0f4f8;"></div>
<svg style="position:absolute;left:670.0px;top:516.0px;overflow:visible" width="32" height="32" viewBox="0 0 32 32"><g fill="#2f80ff" stroke="#2f80ff" stroke-width="1.6" stroke-linejoin="round"><path d="M1 5.400 12.200 3.800V14.100H1Z"/><path d="M17 3.100 31 1V14.100H17Z"/><path d="M1 17.900H12.200V28.200L1 26.600Z"/><path d="M17 17.900H31V31L17 28.900Z"/></g></svg>
<svg style="position:absolute;left:765.5px;top:515.5px;overflow:visible" width="33" height="33" viewBox="0 0 33 33"><defs><clipPath id="u2"><circle cx="16.500" cy="16.500" r="16.500"/></clipPath></defs><g clip-path="url(#u2)"><rect x="0" y="0.000" width="33" height="2.540" fill="#b22234"/><rect x="0" y="2.538" width="33" height="2.540" fill="#fff"/><rect x="0" y="5.077" width="33" height="2.540" fill="#b22234"/><rect x="0" y="7.615" width="33" height="2.540" fill="#fff"/><rect x="0" y="10.154" width="33" height="2.540" fill="#b22234"/><rect x="0" y="12.692" width="33" height="2.540" fill="#fff"/><rect x="0" y="15.231" width="33" height="2.540" fill="#b22234"/><rect x="0" y="17.770" width="33" height="2.540" fill="#fff"/><rect x="0" y="20.308" width="33" height="2.540" fill="#b22234"/><rect x="0" y="22.846" width="33" height="2.540" fill="#fff"/><rect x="0" y="25.385" width="33" height="2.540" fill="#b22234"/><rect x="0" y="27.924" width="33" height="2.540" fill="#fff"/><rect x="0" y="30.462" width="33" height="2.540" fill="#b22234"/><rect x="0" y="0" width="16.500" height="17.770" fill="#3c3b6e"/><circle cx="1.60" cy="1.60" r="0.75" fill="#fff"/><circle cx="4.80" cy="1.60" r="0.75" fill="#fff"/><circle cx="8.00" cy="1.60" r="0.75" fill="#fff"/><circle cx="11.20" cy="1.60" r="0.75" fill="#fff"/><circle cx="14.40" cy="1.60" r="0.75" fill="#fff"/><circle cx="3.20" cy="3.95" r="0.75" fill="#fff"/><circle cx="6.40" cy="3.95" r="0.75" fill="#fff"/><circle cx="9.60" cy="3.95" r="0.75" fill="#fff"/><circle cx="12.80" cy="3.95" r="0.75" fill="#fff"/><circle cx="1.60" cy="6.30" r="0.75" fill="#fff"/><circle cx="4.80" cy="6.30" r="0.75" fill="#fff"/><circle cx="8.00" cy="6.30" r="0.75" fill="#fff"/><circle cx="11.20" cy="6.30" r="0.75" fill="#fff"/><circle cx="14.40" cy="6.30" r="0.75" fill="#fff"/><circle cx="3.20" cy="8.65" r="0.75" fill="#fff"/><circle cx="6.40" cy="8.65" r="0.75" fill="#fff"/><circle cx="9.60" cy="8.65" r="0.75" fill="#fff"/><circle cx="12.80" cy="8.65" r="0.75" fill="#fff"/><circle cx="1.60" cy="11.00" r="0.75" fill="#fff"/><circle cx="4.80" cy="11.00" r="0.75" fill="#fff"/><circle cx="8.00" cy="11.00" r="0.75" fill="#fff"/><circle cx="11.20" cy="11.00" r="0.75" fill="#fff"/><circle cx="14.40" cy="11.00" r="0.75" fill="#fff"/><circle cx="3.20" cy="13.35" r="0.75" fill="#fff"/><circle cx="6.40" cy="13.35" r="0.75" fill="#fff"/><circle cx="9.60" cy="13.35" r="0.75" fill="#fff"/><circle cx="12.80" cy="13.35" r="0.75" fill="#fff"/><circle cx="1.60" cy="15.70" r="0.75" fill="#fff"/><circle cx="4.80" cy="15.70" r="0.75" fill="#fff"/><circle cx="8.00" cy="15.70" r="0.75" fill="#fff"/><circle cx="11.20" cy="15.70" r="0.75" fill="#fff"/><circle cx="14.40" cy="15.70" r="0.75" fill="#fff"/></g></svg>
<svg style="position:absolute;left:860.0px;top:514.0px;overflow:visible" width="36" height="36" viewBox="0 0 24 24"><path d="M23.498 6.186a3.016 3.016 0 0 0-2.122-2.136C19.505 3.545 12 3.545 12 3.545s-7.505 0-9.377.505A3.017 3.017 0 0 0 .502 6.186C0 8.070 0 12 0 12s0 3.930.502 5.814a3.016 3.016 0 0 0 2.122 2.136c1.871.505 9.376.505 9.376.505s7.505 0 9.377-.505a3.015 3.015 0 0 0 2.122-2.136C24 15.930 24 12 24 12s0-3.930-.502-5.814z" fill="#ed1c24"/><path d="M9.545 15.568V8.432L15.818 12z" fill="#fff"/></svg>
<span id="t53" style="position:absolute;left:935px;top:519.14px;font-size:25.37px;line-height:25.37px;font-weight:400;color:#0d0f12;white-space:nowrap;letter-spacing:0.305px;-webkit-text-stroke:0.2px #0d0f12;">Untitled Profile</span>
<div style="position:absolute;left:1246px;top:508px;width:142px;height:48px;background:#fff;border:1.5px solid #d2d8dd;border-radius:10px;box-sizing:border-box;box-shadow:0 2px 4px rgba(16,24,40,.08)"></div>
<svg style="position:absolute;left:1268.5px;top:518.5px;overflow:visible" width="27" height="27" viewBox="0 0 24 24"><defs><clipPath id="u3"><circle cx="12" cy="12" r="12"/></clipPath></defs><g clip-path="url(#u3)"><circle cx="12" cy="12" r="12" fill="#13a0fd"/><circle cx="12" cy="12" r="5.200" fill="#fff"/><circle cx="12" cy="12" r="3.100" fill="#13a0fd"/><path d="M12 6.800H23" stroke="#fff" stroke-width="2.100"/><path d="M7.500 14.600 2 5" stroke="#fff" stroke-width="2.100"/><path d="M16.500 14.600 11 24.200" stroke="#fff" stroke-width="2.100"/></g></svg>
<span id="t54" style="position:absolute;left:1307px;top:519.14px;font-size:25.37px;line-height:25.37px;font-weight:400;color:#0d0f12;white-space:nowrap;letter-spacing:-0.682px;-webkit-text-stroke:0.28px #0d0f12;">Open</span>
<svg style="position:absolute;left:1576.25px;top:514.47px;overflow:visible" width="34.61" height="34.61" viewBox="0 0 24 24" fill="none" stroke="#7d858b" stroke-width="1.803" stroke-linecap="round" stroke-linejoin="round" color="#7d858b"><path d="M20 12.500V6a3 3 0 0 0-3-3H7a3 3 0 0 0-3 3v12a3 3 0 0 0 3 3h6"/><path d="M8 8h8"/><path d="M8 12h5"/><path d="M8 16h2.500"/><path d="M19 16v6"/><path d="M16 19h6"/></svg>
<div style="position:absolute;left:1754px;top:508px;width:48px;height:48px;background:#e2e8ee;border:1.5px solid #cfd6dc;border-radius:50%;box-sizing:border-box"></div>
<svg style="position:absolute;left:1764.29px;top:518.29px;overflow:visible" width="27.78" height="27.78" viewBox="0 0 24 24" fill="none" stroke="#626a70" stroke-width="1.901" stroke-linecap="round" stroke-linejoin="round" color="#626a70"><path d="M12.586 2.586A2 2 0 0 0 11.172 2H4a2 2 0 0 0-2 2v7.172a2 2 0 0 0 .586 1.414l8.704 8.704a2.426 2.426 0 0 0 3.420 0l6.580-6.580a2.426 2.426 0 0 0 0-3.420z"/><circle cx="7.500" cy="7.500" r="1.100" fill="currentColor" stroke="none"/></svg>
<div style="position:absolute;left:2083px;top:507px;width:150px;height:50px;background:#e2e8ee;border:1.5px solid #cdd4da;border-radius:10px;box-sizing:border-box"></div>
<svg style="position:absolute;left:2094.53px;top:516.1px;overflow:visible" width="31.44" height="31.44" viewBox="0 0 24 24" fill="none" stroke="#5e666c" stroke-width="1.756" stroke-linecap="round" stroke-linejoin="round" color="#5e666c"><path d="m12.83 2.18a2 2 0 0 0-1.66 0L2.6 6.08a1 1 0 0 0 0 1.83l8.58 3.91a2 2 0 0 0 1.66 0l8.58-3.9a1 1 0 0 0 0-1.83Z"/><path d="m22 17.65-9.17 4.16a2 2 0 0 1-1.66 0L2 17.65"/><path d="m22 12.65-9.17 4.16a2 2 0 0 1-1.66 0L2 12.65"/></svg>
<span id="t55" style="position:absolute;left:2137px;top:519.14px;font-size:25.37px;line-height:25.37px;font-weight:400;color:#2c3136;white-space:nowrap;letter-spacing:0.107px;-webkit-text-stroke:0.2px #2c3136;">Default</span>
<span id="t56" style="position:absolute;left:2429px;top:519.14px;font-size:25.37px;line-height:25.37px;font-weight:400;color:#0d0f12;white-space:nowrap;letter-spacing:0.351px;">2025/04/23 00:20:13</span>
<div style="position:absolute;left:2722px;top:472px;width:12px;height:118px;background:linear-gradient(90deg,rgba(16,24,40,0),rgba(16,24,40,.045))"></div>
<div style="position:absolute;left:2734px;top:472px;width:2px;height:118px;background:#e1e8ee"></div>
<svg style="position:absolute;left:2774.25px;top:516.0px;overflow:visible" width="32.0" height="32.0" viewBox="0 0 24 24" fill="none" stroke="#4f575d" stroke-width="2.25" stroke-linecap="round" stroke-linejoin="round" color="#4f575d"><path d="m19 21-7-4-7 4V5a2 2 0 0 1 2-2h10a2 2 0 0 1 2 2v16z"/></svg>
<svg style="position:absolute;left:2847.57px;top:516.18px;overflow:visible" width="30.13" height="30.13" viewBox="0 0 24 24" fill="none" stroke="#4f575d" stroke-width="2.31" stroke-linecap="round" stroke-linejoin="round" color="#4f575d"><circle cx="14.800" cy="7.400" r="4.400"/><path d="M11.500 15.500h5.200a4.300 4.300 0 0 1 4.300 4.300v2.200"/><path d="M2 19h7"/><path d="m5.800 15.500 3.500 3.500-3.500 3.500"/></svg>
<svg style="position:absolute;left:2931px;top:519.5px;overflow:visible" width="6" height="25" viewBox="0 0 6 25" fill="none"  ><circle cx="3" cy="3" r="3" fill="#4f575d"/><circle cx="3" cy="12.500" r="3" fill="#4f575d"/><circle cx="3" cy="22" r="3" fill="#4f575d"/></svg>
<div style="position:absolute;left:440px;top:710px;width:2548px;height:2px;background:#e1e8ee"></div>
<div style="position:absolute;left:486px;top:635.5px;width:32px;height:32px;background:#fff;border:3px solid #dfe5ec;border-radius:9px;box-sizing:border-box;box-shadow:0 1.5px 1px rgba(120,140,160,.28)"></div>
<span id="t57" style="position:absolute;left:543px;top:641.04px;font-size:23.4px;line-height:23.4px;font-weight:400;color:#4d555b;white-space:nowrap;letter-spacing:0.000px;font-family:'DejaVu Sans Mono', 'Liberation Mono', monospace;-webkit-text-stroke:0.35px #4d555b;">UID-</span>
<span id="t58" style="position:absolute;left:599.36px;top:641.04px;font-size:23.4px;line-height:23.4px;font-weight:400;color:#0d0f12;white-space:nowrap;letter-spacing:-0.032px;font-family:'DejaVu Sans Mono', 'Liberation Mono', monospace;-webkit-text-stroke:0.35px #0d0f12;">13</span>
<svg style="position:absolute;left:710px;top:640px" width="48" height="24" viewBox="0 -12 48 24"><path d="M0 -5.500C16 -7.500 32 -5.500 48 -3.500" stroke="#c084fc" stroke-width="2" fill="none"/><path d="M0 -2.500C16 1.500 32 5.500 48 5.500" stroke="#818cf8" stroke-width="2" fill="none"/><path d="M0 3C16 1 32 -3 48 -4" stroke="#e879f9" stroke-width="2" fill="none"/><path d="M0 6.500C16 6 32 2 48 -1" stroke="#22d3ee" stroke-width="2" fill="none"/></svg>
<svg style="position:absolute;left:806px;top:640px" width="48" height="24" viewBox="0 -12 48 24"><path d="M0 -5.500C16 -6 32 -3 48 0" stroke="#22d3ee" stroke-width="2" fill="none"/><path d="M0 -2.500C16 -1 32 3 48 4.500" stroke="#e879f9" stroke-width="2" fill="none"/><path d="M0 2.500C16 2 32 -3 48 -5" stroke="#818cf8" stroke-width="2" fill="none"/><path d="M0 4.500C16 7 32 7 48 4.500" stroke="#c084fc" stroke-width="2" fill="none"/></svg>
<div style="position:absolute;left:662px;top:628px;width:48px;height:48px;background:#fff;border:1.5px solid #b4bdc5;border-radius:9px;box-sizing:border-box;box-shadow:0 3px 6px rgba(16,24,40,.08);"></div>
<div style="position:absolute;left:758px;top:628px;width:48px;height:48px;background:#fff;border:1.5px solid #b4bdc5;border-radius:9px;box-sizing:border-box;box-shadow:0 3px 6px rgba(16,24,40,.08);"></div>
<div style="position:absolute;left:854px;top:628px;width:48px;height:48px;background:#fff;border:1.5px solid #b4bdc5;border-radius:9px;box-sizing:border-box;box-shadow:0 3px 6px rgba(16,24,40,.08);"></div>
<svg style="position:absolute;left:670.0px;top:636.0px;overflow:visible" width="32" height="32" viewBox="0 0 32 32"><g fill="#2f80ff" stroke="#2f80ff" stroke-width="1.6" stroke-linejoin="round"><path d="M1 5.400 12.200 3.800V14.100H1Z"/><path d="M17 3.100 31 1V14.100H17Z"/><path d="M1 17.900H12.200V28.200L1 26.600Z"/><path d="M17 17.900H31V31L17 28.900Z"/></g></svg>
<svg style="position:absolute;left:765.5px;top:635.5px;overflow:visible" width="33" height="33" viewBox="0 0 33 33"><defs><clipPath id="u4"><circle cx="16.500" cy="16.500" r="16.500"/></clipPath></defs><g clip-path="url(#u4)"><rect x="0" y="0.000" width="33" height="2.540" fill="#b22234"/><rect x="0" y="2.538" width="33" height="2.540" fill="#fff"/><rect x="0" y="5.077" width="33" height="2.540" fill="#b22234"/><rect x="0" y="7.615" width="33" height="2.540" fill="#fff"/><rect x="0" y="10.154" width="33" height="2.540" fill="#b22234"/><rect x="0" y="12.692" width="33" height="2.540" fill="#fff"/><rect x="0" y="15.231" width="33" height="2.540" fill="#b22234"/><rect x="0" y="17.770" width="33" height="2.540" fill="#fff"/><rect x="0" y="20.308" width="33" height="2.540" fill="#b22234"/><rect x="0" y="22.846" width="33" height="2.540" fill="#fff"/><rect x="0" y="25.385" width="33" height="2.540" fill="#b22234"/><rect x="0" y="27.924" width="33" height="2.540" fill="#fff"/><rect x="0" y="30.462" width="33" height="2.540" fill="#b22234"/><rect x="0" y="0" width="16.500" height="17.770" fill="#3c3b6e"/><circle cx="1.60" cy="1.60" r="0.75" fill="#fff"/><circle cx="4.80" cy="1.60" r="0.75" fill="#fff"/><circle cx="8.00" cy="1.60" r="0.75" fill="#fff"/><circle cx="11.20" cy="1.60" r="0.75" fill="#fff"/><circle cx="14.40" cy="1.60" r="0.75" fill="#fff"/><circle cx="3.20" cy="3.95" r="0.75" fill="#fff"/><circle cx="6.40" cy="3.95" r="0.75" fill="#fff"/><circle cx="9.60" cy="3.95" r="0.75" fill="#fff"/><circle cx="12.80" cy="3.95" r="0.75" fill="#fff"/><circle cx="1.60" cy="6.30" r="0.75" fill="#fff"/><circle cx="4.80" cy="6.30" r="0.75" fill="#fff"/><circle cx="8.00" cy="6.30" r="0.75" fill="#fff"/><circle cx="11.20" cy="6.30" r="0.75" fill="#fff"/><circle cx="14.40" cy="6.30" r="0.75" fill="#fff"/><circle cx="3.20" cy="8.65" r="0.75" fill="#fff"/><circle cx="6.40" cy="8.65" r="0.75" fill="#fff"/><circle cx="9.60" cy="8.65" r="0.75" fill="#fff"/><circle cx="12.80" cy="8.65" r="0.75" fill="#fff"/><circle cx="1.60" cy="11.00" r="0.75" fill="#fff"/><circle cx="4.80" cy="11.00" r="0.75" fill="#fff"/><circle cx="8.00" cy="11.00" r="0.75" fill="#fff"/><circle cx="11.20" cy="11.00" r="0.75" fill="#fff"/><circle cx="14.40" cy="11.00" r="0.75" fill="#fff"/><circle cx="3.20" cy="13.35" r="0.75" fill="#fff"/><circle cx="6.40" cy="13.35" r="0.75" fill="#fff"/><circle cx="9.60" cy="13.35" r="0.75" fill="#fff"/><circle cx="12.80" cy="13.35" r="0.75" fill="#fff"/><circle cx="1.60" cy="15.70" r="0.75" fill="#fff"/><circle cx="4.80" cy="15.70" r="0.75" fill="#fff"/><circle cx="8.00" cy="15.70" r="0.75" fill="#fff"/><circle cx="11.20" cy="15.70" r="0.75" fill="#fff"/><circle cx="14.40" cy="15.70" r="0.75" fill="#fff"/></g></svg>
<svg style="position:absolute;left:861.5px;top:635.5px;overflow:visible" width="33" height="33" viewBox="0 0 24 24"><path fill="#202123" d="M22.2819 9.8211a5.9847 5.9847 0 0 0-.5157-4.9108 6.0462 6.0462 0 0 0-6.5098-2.9A6.0651 6.0651 0 0 0 4.9807 4.1818a5.9847 5.9847 0 0 0-3.9977 2.9 6.0462 6.0462 0 0 0 .7427 7.0966 5.98 5.98 0 0 0 .511 4.9107 6.051 6.051 0 0 0 6.5146 2.9001A5.9847 5.9847 0 0 0 13.2599 24a6.0557 6.0557 0 0 0 5.7718-4.2058 5.9894 5.9894 0 0 0 3.9977-2.9001 6.0557 6.0557 0 0 0-.7475-7.0729zm-9.022 12.6081a4.4755 4.4755 0 0 1-2.8764-1.0408l.1419-.0804 4.7783-2.7582a.7948.7948 0 0 0 .3927-.6813v-6.7369l2.02 1.1686a.071.071 0 0 1 .038.052v5.5826a4.504 4.504 0 0 1-4.4945 4.4944zm-9.6607-4.1254a4.4708 4.4708 0 0 1-.5346-3.0137l.142.0852 4.783 2.7582a.7712.7712 0 0 0 .7806 0l5.8428-3.3685v2.3324a.0804.0804 0 0 1-.0332.0615L9.74 19.9502a4.4992 4.4992 0 0 1-6.1408-1.6464zM2.3408 7.8956a4.485 4.485 0 0 1 2.3655-1.9728V11.6a.7664.7664 0 0 0 .3879.6765l5.8144 3.3543-2.0201 1.1685a.0757.0757 0 0 1-.071 0l-4.8303-2.7865A4.504 4.504 0 0 1 2.3408 7.872zm16.5963 3.8558L13.1038 8.364 15.1192 7.2a.0757.0757 0 0 1 .071 0l4.8303 2.7913a4.4944 4.4944 0 0 1-.6765 8.1042v-5.6772a.79.79 0 0 0-.407-.667zm2.0107-3.0231l-.142-.0852-4.7735-2.7818a.7759.7759 0 0 0-.7854 0L9.409 9.2297V6.8974a.0662.0662 0 0 1 .0284-.0615l4.8303-2.7866a4.4992 4.4992 0 0 1 6.6802 4.66zM8.3065 12.863l-2.02-1.1638a.0804.0804 0 0 1-.038-.0567V6.0742a4.4992 4.4992 0 0 1 7.3757-3.4537l-.142.0805L8.704 5.459a.7948.7948 0 0 0-.3927.6813zm1.0976-2.3654l2.602-1.4998 2.6069 1.4998v2.9994l-2.5974 1.4997-2.6067-1.4997Z"/></svg>
<span id="t59" style="position:absolute;left:935px;top:639.14px;font-size:25.37px;line-height:25.37px;font-weight:400;color:#0d0f12;white-space:nowrap;letter-spacing:0.305px;-webkit-text-stroke:0.2px #0d0f12;">Untitled Profile</span>
<div style="position:absolute;left:1246px;top:628px;width:98px;height:48px;background:#fff;border:1.5px solid #d2d8dd;border-radius:10px;box-sizing:border-box;box-shadow:0 2px 4px rgba(16,24,40,.08)"></div>
<span id="t60" style="position:absolute;left:1267.5px;top:638.64px;font-size:25.37px;line-height:25.37px;font-weight:400;color:#0d0f12;white-space:nowrap;letter-spacing:0.161px;-webkit-text-stroke:0.28px #0d0f12;">View</span>
<svg style="position:absolute;left:1582px;top:637px;overflow:visible" width="24" height="30" viewBox="0 0 24 30" fill="none"  ><path d="M3 0h11.500l9.500 9.500V26a4 4 0 0 1-4 4H4a4 4 0 0 1-4-4V3a3 3 0 0 1 3-3Z" fill="#13a1fd"/><path d="M13.500 0.500v6.500a3 3 0 0 0 3 3h6.800Z" fill="#fff"/></svg>
<div style="position:absolute;left:1754px;top:628px;width:48px;height:48px;background:#e2e8ee;border:1.5px solid #cfd6dc;border-radius:50%;box-sizing:border-box"></div>
<svg style="position:absolute;left:1764.29px;top:638.29px;overflow:visible" width="27.78" height="27.78" viewBox="0 0 24 24" fill="none" stroke="#626a70" stroke-width="1.901" stroke-linecap="round" stroke-linejoin="round" color="#626a70"><path d="M12.586 2.586A2 2 0 0 0 11.172 2H4a2 2 0 0 0-2 2v7.172a2 2 0 0 0 .586 1.414l8.704 8.704a2.426 2.426 0 0 0 3.420 0l6.580-6.580a2.426 2.426 0 0 0 0-3.420z"/><circle cx="7.500" cy="7.500" r="1.100" fill="currentColor" stroke="none"/></svg>
<div style="position:absolute;left:2083px;top:627px;width:150px;height:50px;background:#e2e8ee;border:1.5px solid #cdd4da;border-radius:10px;box-sizing:border-box"></div>
<svg style="position:absolute;left:2094.53px;top:636.1px;overflow:visible" width="31.44" height="31.44" viewBox="0 0 24 24" fill="none" stroke="#5e666c" stroke-width="1.756" stroke-linecap="round" stroke-linejoin="round" color="#5e666c"><path d="m12.83 2.18a2 2 0 0 0-1.66 0L2.6 6.08a1 1 0 0 0 0 1.83l8.58 3.91a2 2 0 0 0 1.66 0l8.58-3.9a1 1 0 0 0 0-1.83Z"/><path d="m22 17.65-9.17 4.16a2 2 0 0 1-1.66 0L2 17.65"/><path d="m22 12.65-9.17 4.16a2 2 0 0 1-1.66 0L2 12.65"/></svg>
<span id="t61" style="position:absolute;left:2137px;top:639.14px;font-size:25.37px;line-height:25.37px;font-weight:400;color:#2c3136;white-space:nowrap;letter-spacing:0.107px;-webkit-text-stroke:0.2px #2c3136;">Default</span>
<span id="t62" style="position:absolute;left:2429px;top:639.14px;font-size:25.37px;line-height:25.37px;font-weight:400;color:#0d0f12;white-space:nowrap;letter-spacing:0.351px;">2025/05/02 13:24:08</span>
<div style="position:absolute;left:2722px;top:592px;width:12px;height:118px;background:linear-gradient(90deg,rgba(16,24,40,0),rgba(16,24,40,.045))"></div>
<div style="position:absolute;left:2734px;top:592px;width:2px;height:118px;background:#e1e8ee"></div>
<svg style="position:absolute;left:2774.25px;top:636.0px;overflow:visible" width="32.0" height="32.0" viewBox="0 0 24 24" fill="none" stroke="#4f575d" stroke-width="2.25" stroke-linecap="round" stroke-linejoin="round" color="#4f575d"><path d="m19 21-7-4-7 4V5a2 2 0 0 1 2-2h10a2 2 0 0 1 2 2v16z"/></svg>
<svg style="position:absolute;left:2847.57px;top:636.18px;overflow:visible" width="30.13" height="30.13" viewBox="0 0 24 24" fill="none" stroke="#4f575d" stroke-width="2.31" stroke-linecap="round" stroke-linejoin="round" color="#4f575d"><circle cx="14.800" cy="7.400" r="4.400"/><path d="M11.500 15.500h5.200a4.300 4.300 0 0 1 4.300 4.300v2.200"/><path d="M2 19h7"/><path d="m5.800 15.500 3.500 3.500-3.500 3.500"/></svg>
<svg style="position:absolute;left:2931px;top:639.5px;overflow:visible" width="6" height="25" viewBox="0 0 6 25" fill="none"  ><circle cx="3" cy="3" r="3" fill="#4f575d"/><circle cx="3" cy="12.500" r="3" fill="#4f575d"/><circle cx="3" cy="22" r="3" fill="#4f575d"/></svg>
<div style="position:absolute;left:440px;top:830px;width:2548px;height:2px;background:#e1e8ee"></div>
<div style="position:absolute;left:486px;top:755.5px;width:32px;height:32px;background:#fff;border:3px solid #dfe5ec;border-radius:9px;box-sizing:border-box;box-shadow:0 1.5px 1px rgba(120,140,160,.28)"></div>
<span id="t63" style="position:absolute;left:543px;top:761.04px;font-size:23.4px;line-height:23.4px;font-weight:400;color:#4d555b;white-space:nowrap;letter-spacing:0.000px;font-family:'DejaVu Sans Mono', 'Liberation Mono', monospace;-webkit-text-stroke:0.35px #4d555b;">UID-</span>
<span id="t64" style="position:absolute;left:599.36px;top:761.04px;font-size:23.4px;line-height:23.4px;font-weight:400;color:#0d0f12;white-space:nowrap;letter-spacing:-0.032px;font-family:'DejaVu Sans Mono', 'Liberation Mono', monospace;-webkit-text-stroke:0.35px #0d0f12;">14</span>
<div style="position:absolute;left:710px;top:769.8px;width:48px;height:1.8px;background:repeating-linear-gradient(90deg,transparent 0 2px,#a3adb5 2px 6.300px,transparent 6.300px 8.300px)"></div>
<div style="position:absolute;left:806px;top:769.8px;width:48px;height:1.8px;background:repeating-linear-gradient(90deg,transparent 0 2px,#a3adb5 2px 6.300px,transparent 6.300px 8.300px)"></div>
<div style="position:absolute;left:662px;top:748px;width:48px;height:48px;background:#fff;border:1.5px solid #b4bdc5;border-radius:9px;box-sizing:border-box;box-shadow:0 3px 6px rgba(16,24,40,.08);"></div>
<div style="position:absolute;left:758px;top:748px;width:48px;height:48px;background:#fff;border:1.5px solid #b4bdc5;border-radius:9px;box-sizing:border-box;box-shadow:0 3px 6px rgba(16,24,40,.08);"></div>
<div style="position:absolute;left:854px;top:748px;width:48px;height:48px;background:#fff;border:1.5px solid #b4bdc5;border-radius:9px;box-sizing:border-box;box-shadow:0 3px 6px rgba(16,24,40,.08);"></div>
<svg style="position:absolute;left:670.0px;top:756.0px;overflow:visible" width="32" height="32" viewBox="0 0 32 32"><g fill="#2f80ff" stroke="#2f80ff" stroke-width="1.6" stroke-linejoin="round"><path d="M1 5.400 12.200 3.800V14.100H1Z"/><path d="M17 3.100 31 1V14.100H17Z"/><path d="M1 17.900H12.200V28.200L1 26.600Z"/><path d="M17 17.900H31V31L17 28.900Z"/></g></svg>
<svg style="position:absolute;left:765.5px;top:755.5px;overflow:visible" width="33" height="33" viewBox="0 0 33 33"><defs><clipPath id="u5"><circle cx="16.500" cy="16.500" r="5.600"/></clipPath></defs><circle cx="16.500" cy="16.500" r="16.500" fill="#009b3a"/><path d="M2.500 16.500 16.500 8 30.500 16.500 16.500 25Z" fill="#fedf00"/><circle cx="16.500" cy="16.500" r="5.600" fill="#002776"/><g clip-path="url(#u5)"><path d="M9 15.200a14 14 0 0 1 14 4.500" fill="none" stroke="#fff" stroke-width="1.100"/></g></svg>
<svg style="position:absolute;left:862.5px;top:754.5px;overflow:visible" width="31" height="35" viewBox="0 0 31 35"><path d="M4 9.500 21.500 6.200 25.500 30.500 9 33.500 1.500 31Z" fill="#95bf47"/><path d="M21.500 6.200 24 6.800 29.500 31 25.500 30.500 9 33.500 25.500 30.500Z" fill="#5e8e3e"/><path d="M21.500 6.200 24.500 6.600 29.800 31.300 25.500 32.200Z" fill="#5e8e3e"/><path d="M9.500 9c.5-4 3-7.500 6-7.500 2.500 0 3.700 2.500 4 5.200" fill="none" stroke="#95bf47" stroke-width="1.700"/><path d="M12.500 8.500c1-3.500 3-6 5.500-6.200" fill="none" stroke="#95bf47" stroke-width="1.300"/></svg><span style="position:absolute;left:861px;top:763px;width:26px;text-align:center;font-weight:700;font-style:italic;font-size:23px;line-height:23px;color:#fff">S</span>
<span id="t65" style="position:absolute;left:935px;top:759.14px;font-size:25.37px;line-height:25.37px;font-weight:400;color:#0d0f12;white-space:nowrap;letter-spacing:0.305px;-webkit-text-stroke:0.2px #0d0f12;">Untitled Profile</span>
<div style="position:absolute;left:1246px;top:748px;width:142px;height:48px;background:#fff;border:1.5px solid #d2d8dd;border-radius:10px;box-sizing:border-box;box-shadow:0 2px 4px rgba(16,24,40,.08)"></div>
<svg style="position:absolute;left:1268.5px;top:758.5px;overflow:visible" width="27" height="27" viewBox="0 0 24 24"><defs><clipPath id="u6"><circle cx="12" cy="12" r="12"/></clipPath></defs><g clip-path="url(#u6)"><circle cx="12" cy="12" r="12" fill="#13a0fd"/><circle cx="12" cy="12" r="5.200" fill="#fff"/><circle cx="12" cy="12" r="3.100" fill="#13a0fd"/><path d="M12 6.800H23" stroke="#fff" stroke-width="2.100"/><path d="M7.500 14.600 2 5" stroke="#fff" stroke-width="2.100"/><path d="M16.500 14.600 11 24.200" stroke="#fff" stroke-width="2.100"/></g></svg>
<span id="t66" style="position:absolute;left:1307px;top:759.14px;font-size:25.37px;line-height:25.37px;font-weight:400;color:#0d0f12;white-space:nowrap;letter-spacing:-0.682px;-webkit-text-stroke:0.28px #0d0f12;">Open</span>
<svg style="position:absolute;left:1576.25px;top:754.47px;overflow:visible" width="34.61" height="34.61" viewBox="0 0 24 24" fill="none" stroke="#7d858b" stroke-width="1.803" stroke-linecap="round" stroke-linejoin="round" color="#7d858b"><path d="M20 12.500V6a3 3 0 0 0-3-3H7a3 3 0 0 0-3 3v12a3 3 0 0 0 3 3h6"/><path d="M8 8h8"/><path d="M8 12h5"/><path d="M8 16h2.500"/><path d="M19 16v6"/><path d="M16 19h6"/></svg>
<div style="position:absolute;left:1754px;top:748px;width:48px;height:48px;background:#e2e8ee;border:1.5px solid #cfd6dc;border-radius:50%;box-sizing:border-box"></div>
<svg style="position:absolute;left:1764.29px;top:758.29px;overflow:visible" width="27.78" height="27.78" viewBox="0 0 24 24" fill="none" stroke="#626a70" stroke-width="1.901" stroke-linecap="round" stroke-linejoin="round" color="#626a70"><path d="M12.586 2.586A2 2 0 0 0 11.172 2H4a2 2 0 0 0-2 2v7.172a2 2 0 0 0 .586 1.414l8.704 8.704a2.426 2.426 0 0 0 3.420 0l6.580-6.580a2.426 2.426 0 0 0 0-3.420z"/><circle cx="7.500" cy="7.500" r="1.100" fill="currentColor" stroke="none"/></svg>
<div style="position:absolute;left:2083px;top:747px;width:218px;height:50px;background:#e2e8ee;border:1.5px solid #cdd4da;border-radius:10px;box-sizing:border-box"></div>
<svg style="position:absolute;left:2094.53px;top:756.1px;overflow:visible" width="31.44" height="31.44" viewBox="0 0 24 24" fill="none" stroke="#5e666c" stroke-width="1.756" stroke-linecap="round" stroke-linejoin="round" color="#5e666c"><path d="m12.83 2.18a2 2 0 0 0-1.66 0L2.6 6.08a1 1 0 0 0 0 1.83l8.58 3.91a2 2 0 0 0 1.66 0l8.58-3.9a1 1 0 0 0 0-1.83Z"/><path d="m22 17.65-9.17 4.16a2 2 0 0 1-1.66 0L2 17.65"/><path d="m22 12.65-9.17 4.16a2 2 0 0 1-1.66 0L2 12.65"/></svg>
<span id="t67" style="position:absolute;left:2137px;top:759.14px;font-size:25.37px;line-height:25.37px;font-weight:400;color:#2c3136;white-space:nowrap;letter-spacing:-0.040px;-webkit-text-stroke:0.2px #2c3136;">E-Commerce</span>
<span id="t68" style="position:absolute;left:2429px;top:759.14px;font-size:25.37px;line-height:25.37px;font-weight:400;color:#0d0f12;white-space:nowrap;letter-spacing:0.351px;">2025/04/23 00:20:13</span>
<div style="position:absolute;left:2722px;top:712px;width:12px;height:118px;background:linear-gradient(90deg,rgba(16,24,40,0),rgba(16,24,40,.045))"></div>
<div style="position:absolute;left:2734px;top:712px;width:2px;height:118px;background:#e1e8ee"></div>
<svg style="position:absolute;left:2774.25px;top:756.0px;overflow:visible" width="32.0" height="32.0" viewBox="0 0 24 24" fill="none" stroke="#4f575d" stroke-width="2.25" stroke-linecap="round" stroke-linejoin="round" color="#4f575d"><path d="m19 21-7-4-7 4V5a2 2 0 0 1 2-2h10a2 2 0 0 1 2 2v16z"/></svg>
<svg style="position:absolute;left:2847.57px;top:756.18px;overflow:visible" width="30.13" height="30.13" viewBox="0 0 24 24" fill="none" stroke="#4f575d" stroke-width="2.31" stroke-linecap="round" stroke-linejoin="round" color="#4f575d"><circle cx="14.800" cy="7.400" r="4.400"/><path d="M11.500 15.500h5.200a4.300 4.300 0 0 1 4.300 4.300v2.200"/><path d="M2 19h7"/><path d="m5.800 15.500 3.500 3.500-3.500 3.500"/></svg>
<svg style="position:absolute;left:2931px;top:759.5px;overflow:visible" width="6" height="25" viewBox="0 0 6 25" fill="none"  ><circle cx="3" cy="3" r="3" fill="#4f575d"/><circle cx="3" cy="12.500" r="3" fill="#4f575d"/><circle cx="3" cy="22" r="3" fill="#4f575d"/></svg>
<div style="position:absolute;left:440px;top:950px;width:2548px;height:2px;background:#e1e8ee"></div>
<div style="position:absolute;left:486px;top:875.5px;width:32px;height:32px;background:#fff;border:3px solid #dfe5ec;border-radius:9px;box-sizing:border-box;box-shadow:0 1.5px 1px rgba(120,140,160,.28)"></div>
<span id="t69" style="position:absolute;left:543px;top:881.04px;font-size:23.4px;line-height:23.4px;font-weight:400;color:#4d555b;white-space:nowrap;letter-spacing:0.000px;font-family:'DejaVu Sans Mono', 'Liberation Mono', monospace;-webkit-text-stroke:0.35px #4d555b;">UID-</span>
<span id="t70" style="position:absolute;left:599.36px;top:881.04px;font-size:23.4px;line-height:23.4px;font-weight:400;color:#0d0f12;white-space:nowrap;letter-spacing:-0.032px;font-family:'DejaVu Sans Mono', 'Liberation Mono', monospace;-webkit-text-stroke:0.35px #0d0f12;">15</span>
<div style="position:absolute;left:710px;top:889.8px;width:48px;height:1.8px;background:repeating-linear-gradient(90deg,transparent 0 2px,#a3adb5 2px 6.300px,transparent 6.300px 8.300px)"></div>
<div style="position:absolute;left:806px;top:889.8px;width:48px;height:1.8px;background:repeating-linear-gradient(90deg,transparent 0 2px,#a3adb5 2px 6.300px,transparent 6.300px 8.300px)"></div>
<div style="position:absolute;left:662px;top:868px;width:48px;height:48px;background:#fff;border:1.5px solid #b4bdc5;border-radius:9px;box-sizing:border-box;box-shadow:0 3px 6px rgba(16,24,40,.08);"></div>
<div style="position:absolute;left:758px;top:868px;width:48px;height:48px;background:#fff;border:1.5px solid #b4bdc5;border-radius:9px;box-sizing:border-box;box-shadow:0 3px 6px rgba(16,24,40,.08);"></div>
<div style="position:absolute;left:854px;top:868px;width:48px;height:48px;background:#fff;border:1.5px solid #b4bdc5;border-radius:9px;box-sizing:border-box;box-shadow:0 3px 6px rgba(16,24,40,.08);"></div>
<span style="position:absolute;left:662px;top:874.8px;width:48px;text-align:center;font-size:13.5px;line-height:13.5px;color:#222;letter-spacing:0.1px">mac</span><span style="position:absolute;left:662px;top:886.8px;width:48px;text-align:center;font-size:23.5px;line-height:23.5px;color:#1d1d1f;letter-spacing:-0.2px">OS</span>
<svg style="position:absolute;left:765.5px;top:875.5px;overflow:visible" width="33" height="33" viewBox="0 0 33 33"><defs><clipPath id="u7"><circle cx="16.500" cy="16.500" r="16.500"/></clipPath></defs><g clip-path="url(#u7)"><rect width="33" height="33" fill="#012169"/><path d="M0 0 33 33M33 0 0 33" stroke="#fff" stroke-width="5.600"/><path d="M0 0 33 33M33 0 0 33" stroke="#c8102e" stroke-width="1.900"/><path d="M16.500 0V33M0 16.500H33" stroke="#fff" stroke-width="9.400"/><path d="M16.500 0V33M0 16.500H33" stroke="#c8102e" stroke-width="5.200"/></g></svg>
<svg style="position:absolute;left:860.0px;top:874.0px;overflow:visible" width="36" height="36" viewBox="0 0 36 36"><defs><linearGradient id="u8" x1="0" y1="0" x2="0" y2="1"><stop offset="0" stop-color="#2aabee"/><stop offset="1" stop-color="#229ed9"/></linearGradient></defs><circle cx="18" cy="18" r="18" fill="url(#u8)"/><path d="M7.300 17.600 25.600 10.300c.9-.3 1.600.2 1.300 1.500l-3.100 14.700c-.2 1-.9 1.300-1.700.8l-4.700-3.500-2.300 2.200c-.3.300-.5.500-1 .5l.4-4.900 8.800-8c.4-.3-.1-.5-.6-.2l-10.900 6.900-4.600-1.500c-1-.3-1-1 .100-1.200Z" fill="#fff"/><path d="M13.700 21.600 14.100 26.500c.5 0 .7-.2 1-.5l2.300-2.200Z" fill="#c8daea"/></svg>
<div style="position:absolute;left:886px;top:860px;width:32px;height:32px;background:#fff;border:1.5px solid #c3cbd2;border-radius:9px;box-sizing:border-box;box-shadow:0 3px 6px rgba(16,24,40,.08)"></div>
<svg style="position:absolute;left:891.5px;top:873px;overflow:visible" width="21" height="6" viewBox="0 0 21 6" fill="none"  ><circle cx="3" cy="3" r="2.100" fill="#59626a"/><circle cx="10.500" cy="3" r="2.100" fill="#59626a"/><circle cx="18" cy="3" r="2.100" fill="#59626a"/></svg>
<span id="t71" style="position:absolute;left:935px;top:879.14px;font-size:25.37px;line-height:25.37px;font-weight:400;color:#0d0f12;white-space:nowrap;letter-spacing:0.305px;-webkit-text-stroke:0.2px #0d0f12;">Untitled Profile</span>
<div style="position:absolute;left:1246px;top:868px;width:142px;height:48px;background:#fff;border:1.5px solid #d2d8dd;border-radius:10px;box-sizing:border-box;box-shadow:0 2px 4px rgba(16,24,40,.08)"></div>
<svg style="position:absolute;left:1268.5px;top:878.5px;overflow:visible" width="27" height="27" viewBox="0 0 24 24"><defs><clipPath id="u9"><circle cx="12" cy="12" r="12"/></clipPath></defs><g clip-path="url(#u9)"><circle cx="12" cy="12" r="12" fill="#13a0fd"/><circle cx="12" cy="12" r="5.200" fill="#fff"/><circle cx="12" cy="12" r="3.100" fill="#13a0fd"/><path d="M12 6.800H23" stroke="#fff" stroke-width="2.100"/><path d="M7.500 14.600 2 5" stroke="#fff" stroke-width="2.100"/><path d="M16.500 14.600 11 24.200" stroke="#fff" stroke-width="2.100"/></g></svg>
<span id="t72" style="position:absolute;left:1307px;top:879.14px;font-size:25.37px;line-height:25.37px;font-weight:400;color:#0d0f12;white-space:nowrap;letter-spacing:-0.682px;-webkit-text-stroke:0.28px #0d0f12;">Open</span>
<svg style="position:absolute;left:1576.25px;top:874.47px;overflow:visible" width="34.61" height="34.61" viewBox="0 0 24 24" fill="none" stroke="#7d858b" stroke-width="1.803" stroke-linecap="round" stroke-linejoin="round" color="#7d858b"><path d="M20 12.500V6a3 3 0 0 0-3-3H7a3 3 0 0 0-3 3v12a3 3 0 0 0 3 3h6"/><path d="M8 8h8"/><path d="M8 12h5"/><path d="M8 16h2.500"/><path d="M19 16v6"/><path d="M16 19h6"/></svg>
<div style="position:absolute;left:1754px;top:868px;width:48px;height:48px;background:#e2e8ee;border:1.5px solid #cfd6dc;border-radius:50%;box-sizing:border-box"></div>
<svg style="position:absolute;left:1764.29px;top:878.29px;overflow:visible" width="27.78" height="27.78" viewBox="0 0 24 24" fill="none" stroke="#626a70" stroke-width="1.901" stroke-linecap="round" stroke-linejoin="round" color="#626a70"><path d="M12.586 2.586A2 2 0 0 0 11.172 2H4a2 2 0 0 0-2 2v7.172a2 2 0 0 0 .586 1.414l8.704 8.704a2.426 2.426 0 0 0 3.420 0l6.580-6.580a2.426 2.426 0 0 0 0-3.420z"/><circle cx="7.500" cy="7.500" r="1.100" fill="currentColor" stroke="none"/></svg>
<div style="position:absolute;left:2083px;top:867px;width:150px;height:50px;background:#e2e8ee;border:1.5px solid #cdd4da;border-radius:10px;box-sizing:border-box"></div>
<svg style="position:absolute;left:2094.53px;top:876.1px;overflow:visible" width="31.44" height="31.44" viewBox="0 0 24 24" fill="none" stroke="#5e666c" stroke-width="1.756" stroke-linecap="round" stroke-linejoin="round" color="#5e666c"><path d="m12.83 2.18a2 2 0 0 0-1.66 0L2.6 6.08a1 1 0 0 0 0 1.83l8.58 3.91a2 2 0 0 0 1.66 0l8.58-3.9a1 1 0 0 0 0-1.83Z"/><path d="m22 17.65-9.17 4.16a2 2 0 0 1-1.66 0L2 17.65"/><path d="m22 12.65-9.17 4.16a2 2 0 0 1-1.66 0L2 12.65"/></svg>
<span id="t73" style="position:absolute;left:2137px;top:879.14px;font-size:25.37px;line-height:25.37px;font-weight:400;color:#2c3136;white-space:nowrap;letter-spacing:0.107px;-webkit-text-stroke:0.2px #2c3136;">Default</span>
<span id="t74" style="position:absolute;left:2429px;top:879.14px;font-size:25.37px;line-height:25.37px;font-weight:400;color:#0d0f12;white-space:nowrap;letter-spacing:0.351px;">2025/05/02 13:24:08</span>
<div style="position:absolute;left:2722px;top:832px;width:12px;height:118px;background:linear-gradient(90deg,rgba(16,24,40,0),rgba(16,24,40,.045))"></div>
<div style="position:absolute;left:2734px;top:832px;width:2px;height:118px;background:#e1e8ee"></div>
<svg style="position:absolute;left:2774.25px;top:876.0px;overflow:visible" width="32.0" height="32.0" viewBox="0 0 24 24" fill="none" stroke="#4f575d" stroke-width="2.25" stroke-linecap="round" stroke-linejoin="round" color="#4f575d"><path d="m19 21-7-4-7 4V5a2 2 0 0 1 2-2h10a2 2 0 0 1 2 2v16z"/></svg>
<svg style="position:absolute;left:2847.57px;top:876.18px;overflow:visible" width="30.13" height="30.13" viewBox="0 0 24 24" fill="none" stroke="#4f575d" stroke-width="2.31" stroke-linecap="round" stroke-linejoin="round" color="#4f575d"><circle cx="14.800" cy="7.400" r="4.400"/><path d="M11.500 15.500h5.200a4.300 4.300 0 0 1 4.300 4.300v2.200"/><path d="M2 19h7"/><path d="m5.800 15.500 3.500 3.500-3.500 3.500"/></svg>
<svg style="position:absolute;left:2931px;top:879.5px;overflow:visible" width="6" height="25" viewBox="0 0 6 25" fill="none"  ><circle cx="3" cy="3" r="3" fill="#4f575d"/><circle cx="3" cy="12.500" r="3" fill="#4f575d"/><circle cx="3" cy="22" r="3" fill="#4f575d"/></svg>
<div style="position:absolute;left:440px;top:1070px;width:2548px;height:2px;background:#e1e8ee"></div>
<div style="position:absolute;left:486px;top:995.5px;width:32px;height:32px;background:#fff;border:3px solid #dfe5ec;border-radius:9px;box-sizing:border-box;box-shadow:0 1.5px 1px rgba(120,140,160,.28)"></div>
<span id="t75" style="position:absolute;left:543px;top:1001.04px;font-size:23.4px;line-height:23.4px;font-weight:400;color:#4d555b;white-space:nowrap;letter-spacing:0.000px;font-family:'DejaVu Sans Mono', 'Liberation Mono', monospace;-webkit-text-stroke:0.35px #4d555b;">UID-</span>
<span id="t76" style="position:absolute;left:599.36px;top:1001.04px;font-size:23.4px;line-height:23.4px;font-weight:400;color:#0d0f12;white-space:nowrap;letter-spacing:-0.032px;font-family:'DejaVu Sans Mono', 'Liberation Mono', monospace;-webkit-text-stroke:0.35px #0d0f12;">16</span>
<svg style="position:absolute;left:710px;top:1000px" width="48" height="24" viewBox="0 -12 48 24"><path d="M0 -5.500C16 -7.500 32 -5.500 48 -3.500" stroke="#c084fc" stroke-width="2" fill="none"/><path d="M0 -2.500C16 1.500 32 5.500 48 5.500" stroke="#818cf8" stroke-width="2" fill="none"/><path d="M0 3C16 1 32 -3 48 -4" stroke="#e879f9" stroke-width="2" fill="none"/><path d="M0 6.500C16 6 32 2 48 -1" stroke="#22d3ee" stroke-width="2" fill="none"/></svg>
<svg style="position:absolute;left:806px;top:1000px" width="48" height="24" viewBox="0 -12 48 24"><path d="M0 -5.500C16 -6 32 -3 48 0" stroke="#22d3ee" stroke-width="2" fill="none"/><path d="M0 -2.500C16 -1 32 3 48 4.500" stroke="#e879f9" stroke-width="2" fill="none"/><path d="M0 2.500C16 2 32 -3 48 -5" stroke="#818cf8" stroke-width="2" fill="none"/><path d="M0 4.500C16 7 32 7 48 4.500" stroke="#c084fc" stroke-width="2" fill="none"/></svg>
<div style="position:absolute;left:662px;top:988px;width:48px;height:48px;background:#fff;border:1.5px solid #b4bdc5;border-radius:9px;box-sizing:border-box;box-shadow:0 3px 6px rgba(16,24,40,.08);"></div>
<div style="position:absolute;left:758px;top:988px;width:48px;height:48px;background:#fff;border:1.5px solid #b4bdc5;border-radius:9px;box-sizing:border-box;box-shadow:0 3px 6px rgba(16,24,40,.08);"></div>
<div style="position:absolute;left:854px;top:988px;width:48px;height:48px;background:#fff;border:1.5px solid #b4bdc5;border-radius:9px;box-sizing:border-box;box-shadow:0 3px 6px rgba(16,24,40,.08);"></div>
<span style="position:absolute;left:662px;top:994.8px;width:48px;text-align:center;font-size:13.5px;line-height:13.5px;color:#222;letter-spacing:0.1px">mac</span><span style="position:absolute;left:662px;top:1006.8px;width:48px;text-align:center;font-size:23.5px;line-height:23.5px;color:#1d1d1f;letter-spacing:-0.2px">OS</span>
<svg style="position:absolute;left:765.5px;top:995.5px;overflow:visible" width="33" height="33" viewBox="0 0 33 33"><defs><clipPath id="u10"><circle cx="16.500" cy="16.500" r="16.500"/></clipPath></defs><g clip-path="url(#u10)"><rect width="33" height="33" fill="#012169"/><path d="M0 0 33 33M33 0 0 33" stroke="#fff" stroke-width="5.600"/><path d="M0 0 33 33M33 0 0 33" stroke="#c8102e" stroke-width="1.900"/><path d="M16.500 0V33M0 16.500H33" stroke="#fff" stroke-width="9.400"/><path d="M16.500 0V33M0 16.500H33" stroke="#c8102e" stroke-width="5.200"/></g></svg>
<span style="position:absolute;left:854px;top:987.5px;width:48px;text-align:center;font-weight:700;font-size:36.5px;line-height:36.5px;color:#252525;-webkit-text-stroke:0.5px #252525">a</span><svg style="position:absolute;left:861.5px;top:1018.0px;overflow:visible" width="34" height="9" viewBox="0 0 34 9"><path d="M1 2.500c9.500 6 21.500 5.500 30.500.5" fill="none" stroke="#ff9900" stroke-width="2" stroke-linecap="round"/><path d="M28.300 1.300 33 .8 31.800 5.300" fill="none" stroke="#ff9900" stroke-width="1.700" stroke-linecap="round" stroke-linejoin="round"/></svg>
<div style="position:absolute;left:886px;top:980px;width:32px;height:32px;background:#fff;border:1.5px solid #c3cbd2;border-radius:9px;box-sizing:border-box;box-shadow:0 3px 6px rgba(16,24,40,.08)"></div>
<span style="position:absolute;left:892.0px;top:986.0px;width:20px;height:20px;border-radius:50%;background:#0866ff;overflow:hidden"><span style="position:absolute;left:1.40px;top:0.70px;width:20px;text-align:center;font-weight:700;font-size:22.8px;line-height:22.8px;color:#fff">f</span></span>
<span id="t77" style="position:absolute;left:935px;top:999.14px;font-size:25.37px;line-height:25.37px;font-weight:400;color:#0d0f12;white-space:nowrap;letter-spacing:0.305px;-webkit-text-stroke:0.2px #0d0f12;">Untitled Profile</span>
<div style="position:absolute;left:1246px;top:988px;width:98px;height:48px;background:#fff;border:1.5px solid #d2d8dd;border-radius:10px;box-sizing:border-box;box-shadow:0 2px 4px rgba(16,24,40,.08)"></div>
<span id="t78" style="position:absolute;left:1267.5px;top:998.64px;font-size:25.37px;line-height:25.37px;font-weight:400;color:#0d0f12;white-space:nowrap;letter-spacing:0.161px;-webkit-text-stroke:0.28px #0d0f12;">View</span>
<svg style="position:absolute;left:1576.25px;top:994.47px;overflow:visible" width="34.61" height="34.61" viewBox="0 0 24 24" fill="none" stroke="#7d858b" stroke-width="1.803" stroke-linecap="round" stroke-linejoin="round" color="#7d858b"><path d="M20 12.500V6a3 3 0 0 0-3-3H7a3 3 0 0 0-3 3v12a3 3 0 0 0 3 3h6"/><path d="M8 8h8"/><path d="M8 12h5"/><path d="M8 16h2.500"/><path d="M19 16v6"/><path d="M16 19h6"/></svg>
<div style="position:absolute;left:1754px;top:988px;width:48px;height:48px;background:#e2e8ee;border:1.5px solid #cfd6dc;border-radius:50%;box-sizing:border-box"></div>
<svg style="position:absolute;left:1764.29px;top:998.29px;overflow:visible" width="27.78" height="27.78" viewBox="0 0 24 24" fill="none" stroke="#626a70" stroke-width="1.901" stroke-linecap="round" stroke-linejoin="round" color="#626a70"><path d="M12.586 2.586A2 2 0 0 0 11.172 2H4a2 2 0 0 0-2 2v7.172a2 2 0 0 0 .586 1.414l8.704 8.704a2.426 2.426 0 0 0 3.420 0l6.580-6.580a2.426 2.426 0 0 0 0-3.420z"/><circle cx="7.500" cy="7.500" r="1.100" fill="currentColor" stroke="none"/></svg>
<div style="position:absolute;left:2083px;top:987px;width:218px;height:50px;background:#e2e8ee;border:1.5px solid #cdd4da;border-radius:10px;box-sizing:border-box"></div>
<svg style="position:absolute;left:2094.53px;top:996.1px;overflow:visible" width="31.44" height="31.44" viewBox="0 0 24 24" fill="none" stroke="#5e666c" stroke-width="1.756" stroke-linecap="round" stroke-linejoin="round" color="#5e666c"><path d="m12.83 2.18a2 2 0 0 0-1.66 0L2.6 6.08a1 1 0 0 0 0 1.83l8.58 3.91a2 2 0 0 0 1.66 0l8.58-3.9a1 1 0 0 0 0-1.83Z"/><path d="m22 17.65-9.17 4.16a2 2 0 0 1-1.66 0L2 17.65"/><path d="m22 12.65-9.17 4.16a2 2 0 0 1-1.66 0L2 12.65"/></svg>
<span id="t79" style="position:absolute;left:2137px;top:999.14px;font-size:25.37px;line-height:25.37px;font-weight:400;color:#2c3136;white-space:nowrap;letter-spacing:-0.040px;-webkit-text-stroke:0.2px #2c3136;">E-Commerce</span>
<span id="t80" style="position:absolute;left:2429px;top:999.14px;font-size:25.37px;line-height:25.37px;font-weight:400;color:#0d0f12;white-space:nowrap;letter-spacing:0.351px;">2025/04/23 00:20:13</span>
<div style="position:absolute;left:2722px;top:952px;width:12px;height:118px;background:linear-gradient(90deg,rgba(16,24,40,0),rgba(16,24,40,.045))"></div>
<div style="position:absolute;left:2734px;top:952px;width:2px;height:118px;background:#e1e8ee"></div>
<svg style="position:absolute;left:2774.25px;top:996.0px;overflow:visible" width="32.0" height="32.0" viewBox="0 0 24 24" fill="none" stroke="#4f575d" stroke-width="2.25" stroke-linecap="round" stroke-linejoin="round" color="#4f575d"><path d="m19 21-7-4-7 4V5a2 2 0 0 1 2-2h10a2 2 0 0 1 2 2v16z"/></svg>
<svg style="position:absolute;left:2847.57px;top:996.18px;overflow:visible" width="30.13" height="30.13" viewBox="0 0 24 24" fill="none" stroke="#4f575d" stroke-width="2.31" stroke-linecap="round" stroke-linejoin="round" color="#4f575d"><circle cx="14.800" cy="7.400" r="4.400"/><path d="M11.500 15.500h5.200a4.300 4.300 0 0 1 4.300 4.300v2.200"/><path d="M2 19h7"/><path d="m5.800 15.500 3.500 3.500-3.500 3.500"/></svg>
<svg style="position:absolute;left:2931px;top:999.5px;overflow:visible" width="6" height="25" viewBox="0 0 6 25" fill="none"  ><circle cx="3" cy="3" r="3" fill="#4f575d"/><circle cx="3" cy="12.500" r="3" fill="#4f575d"/><circle cx="3" cy="22" r="3" fill="#4f575d"/></svg>
<div style="position:absolute;left:440px;top:1190px;width:2548px;height:2px;background:#e1e8ee"></div>
<div style="position:absolute;left:486px;top:1115.5px;width:32px;height:32px;background:#fff;border:3px solid #dfe5ec;border-radius:9px;box-sizing:border-box;box-shadow:0 1.5px 1px rgba(120,140,160,.28)"></div>
<span id="t81" style="position:absolute;left:543px;top:1121.04px;font-size:23.4px;line-height:23.4px;font-weight:400;color:#4d555b;white-space:nowrap;letter-spacing:0.000px;font-family:'DejaVu Sans Mono', 'Liberation Mono', monospace;-webkit-text-stroke:0.35px #4d555b;">UID-</span>
<span id="t82" style="position:absolute;left:599.36px;top:1121.04px;font-size:23.4px;line-height:23.4px;font-weight:400;color:#0d0f12;white-space:nowrap;letter-spacing:-0.032px;font-family:'DejaVu Sans Mono', 'Liberation Mono', monospace;-webkit-text-stroke:0.35px #0d0f12;">17</span>
<div style="position:absolute;left:710px;top:1129.8px;width:48px;height:1.8px;background:repeating-linear-gradient(90deg,transparent 0 2px,#a3adb5 2px 6.300px,transparent 6.300px 8.300px)"></div>
<div style="position:absolute;left:806px;top:1129.8px;width:48px;height:1.8px;background:repeating-linear-gradient(90deg,transparent 0 2px,#a3adb5 2px 6.300px,transparent 6.300px 8.300px)"></div>
<div style="position:absolute;left:662px;top:1108px;width:48px;height:48px;background:#fff;border:1.5px solid #b4bdc5;border-radius:9px;box-sizing:border-box;box-shadow:0 3px 6px rgba(16,24,40,.08);"></div>
<div style="position:absolute;left:758px;top:1108px;width:48px;height:48px;background:#fff;border:1.5px solid #b4bdc5;border-radius:9px;box-sizing:border-box;box-shadow:0 3px 6px rgba(16,24,40,.08);"></div>
<div style="position:absolute;left:854px;top:1108px;width:48px;height:48px;background:#fff;border:1.5px solid #b4bdc5;border-radius:9px;box-sizing:border-box;box-shadow:0 3px 6px rgba(16,24,40,.08);"></div>
<svg style="position:absolute;left:670.0px;top:1119.0px;overflow:visible" width="32" height="26" viewBox="0 3 32 22"><path d="M0.500 22.500a15.500 15.500 0 0 1 31 0Z" fill="#7ac70c"/><path d="M9.200 10.500 6 5" stroke="#7ac70c" stroke-width="1.800" stroke-linecap="round"/><path d="M22.800 10.500 26 5" stroke="#7ac70c" stroke-width="1.800" stroke-linecap="round"/><circle cx="9" cy="16.500" r="1.700" fill="#fff"/><circle cx="23" cy="16.500" r="1.700" fill="#fff"/></svg>
<svg style="position:absolute;left:765.5px;top:1115.5px;overflow:visible" width="33" height="33" viewBox="0 0 33 33"><circle cx="16.500" cy="16.500" r="16.500" fill="#ee1c25"/><g transform="translate(16.500 16.500) scale(1.280) translate(-16.500 -16.500)"><g transform="rotate(0 16.500 16.500)"><path d="M16.500 15.800c-2.600-1.200-3.600-4-2.200-6.300 1-1.700 2.800-2.300 4.500-2-1.500.8-2.200 2.200-1.700 3.800.4 1.500.5 3-.6 4.500Z" fill="#fff"/><path d="M16.300 14.500c-.300-1.700-.800-3 .100-4.600" fill="none" stroke="#ee1c25" stroke-width=".5"/></g><g transform="rotate(72 16.500 16.500)"><path d="M16.500 15.800c-2.600-1.200-3.600-4-2.200-6.300 1-1.700 2.800-2.300 4.500-2-1.500.8-2.200 2.200-1.700 3.800.4 1.500.5 3-.6 4.500Z" fill="#fff"/><path d="M16.300 14.500c-.300-1.700-.800-3 .100-4.600" fill="none" stroke="#ee1c25" stroke-width=".5"/></g><g transform="rotate(144 16.500 16.500)"><path d="M16.500 15.800c-2.600-1.200-3.600-4-2.200-6.300 1-1.700 2.800-2.300 4.500-2-1.500.8-2.200 2.200-1.700 3.800.4 1.500.5 3-.6 4.500Z" fill="#fff"/><path d="M16.300 14.500c-.300-1.700-.800-3 .100-4.600" fill="none" stroke="#ee1c25" stroke-width=".5"/></g><g transform="rotate(216 16.500 16.500)"><path d="M16.500 15.800c-2.600-1.200-3.600-4-2.200-6.300 1-1.700 2.800-2.300 4.500-2-1.500.8-2.200 2.200-1.700 3.800.4 1.500.5 3-.6 4.500Z" fill="#fff"/><path d="M16.300 14.500c-.300-1.700-.800-3 .100-4.600" fill="none" stroke="#ee1c25" stroke-width=".5"/></g><g transform="rotate(288 16.500 16.500)"><path d="M16.500 15.800c-2.600-1.200-3.600-4-2.200-6.300 1-1.700 2.800-2.300 4.500-2-1.500.8-2.200 2.200-1.700 3.800.4 1.500.5 3-.6 4.500Z" fill="#fff"/><path d="M16.300 14.500c-.300-1.700-.800-3 .100-4.600" fill="none" stroke="#ee1c25" stroke-width=".5"/></g></g></svg>
<svg style="position:absolute;left:862.0px;top:1113.5px;overflow:visible" width="32" height="37" viewBox="0 0 29.500 34"><defs><linearGradient id="u11" x1="0.700" y1="0" x2="0.400" y2="1"><stop offset="0" stop-color="#fd297b"/><stop offset="0.600" stop-color="#ff5864"/><stop offset="1" stop-color="#ff7854"/></linearGradient></defs><path fill="url(#u11)" d="M9.300 14.800c6-2.100 7.100-7.500 6.300-12.500 0-.2.200-.3.300-.2 5.800 2.800 12.300 9 12.300 18.300 0 7.100-5.500 13.400-13.500 13.400C6.100 33.800 1.200 27.800 1.200 20.400c0-4.300 3-8.700 6.400-10.700.2-.1.400 0 .4.200.1 1.100.400 3.700 1.300 4.900Z"/></svg>
<span id="t83" style="position:absolute;left:935px;top:1119.14px;font-size:25.37px;line-height:25.37px;font-weight:400;color:#0d0f12;white-space:nowrap;letter-spacing:0.305px;-webkit-text-stroke:0.2px #0d0f12;">Untitled Profile</span>
<div style="position:absolute;left:1246px;top:1108px;width:142px;height:48px;background:#fff;border:1.5px solid #d2d8dd;border-radius:10px;box-sizing:border-box;box-shadow:0 2px 4px rgba(16,24,40,.08)"></div>
<svg style="position:absolute;left:1268.5px;top:1118.5px;overflow:visible" width="27" height="27" viewBox="0 0 24 24"><defs><clipPath id="u12"><circle cx="12" cy="12" r="12"/></clipPath></defs><g clip-path="url(#u12)"><circle cx="12" cy="12" r="12" fill="#13a0fd"/><circle cx="12" cy="12" r="5.200" fill="#fff"/><circle cx="12" cy="12" r="3.100" fill="#13a0fd"/><path d="M12 6.800H23" stroke="#fff" stroke-width="2.100"/><path d="M7.500 14.600 2 5" stroke="#fff" stroke-width="2.100"/><path d="M16.500 14.600 11 24.200" stroke="#fff" stroke-width="2.100"/></g></svg>
<span id="t84" style="position:absolute;left:1307px;top:1119.14px;font-size:25.37px;line-height:25.37px;font-weight:400;color:#0d0f12;white-space:nowrap;letter-spacing:-0.682px;-webkit-text-stroke:0.28px #0d0f12;">Open</span>
<svg style="position:absolute;left:1576.25px;top:1114.47px;overflow:visible" width="34.61" height="34.61" viewBox="0 0 24 24" fill="none" stroke="#7d858b" stroke-width="1.803" stroke-linecap="round" stroke-linejoin="round" color="#7d858b"><path d="M20 12.500V6a3 3 0 0 0-3-3H7a3 3 0 0 0-3 3v12a3 3 0 0 0 3 3h6"/><path d="M8 8h8"/><path d="M8 12h5"/><path d="M8 16h2.500"/><path d="M19 16v6"/><path d="M16 19h6"/></svg>
<div style="position:absolute;left:1754px;top:1108px;width:48px;height:48px;background:#e2e8ee;border:1.5px solid #cfd6dc;border-radius:50%;box-sizing:border-box"></div>
<svg style="position:absolute;left:1764.29px;top:1118.29px;overflow:visible" width="27.78" height="27.78" viewBox="0 0 24 24" fill="none" stroke="#626a70" stroke-width="1.901" stroke-linecap="round" stroke-linejoin="round" color="#626a70"><path d="M12.586 2.586A2 2 0 0 0 11.172 2H4a2 2 0 0 0-2 2v7.172a2 2 0 0 0 .586 1.414l8.704 8.704a2.426 2.426 0 0 0 3.420 0l6.580-6.580a2.426 2.426 0 0 0 0-3.420z"/><circle cx="7.500" cy="7.500" r="1.100" fill="currentColor" stroke="none"/></svg>
<div style="position:absolute;left:2083px;top:1107px;width:150px;height:50px;background:#e2e8ee;border:1.5px solid #cdd4da;border-radius:10px;box-sizing:border-box"></div>
<svg style="position:absolute;left:2094.53px;top:1116.1px;overflow:visible" width="31.44" height="31.44" viewBox="0 0 24 24" fill="none" stroke="#5e666c" stroke-width="1.756" stroke-linecap="round" stroke-linejoin="round" color="#5e666c"><path d="m12.83 2.18a2 2 0 0 0-1.66 0L2.6 6.08a1 1 0 0 0 0 1.83l8.58 3.91a2 2 0 0 0 1.66 0l8.58-3.9a1 1 0 0 0 0-1.83Z"/><path d="m22 17.65-9.17 4.16a2 2 0 0 1-1.66 0L2 17.65"/><path d="m22 12.65-9.17 4.16a2 2 0 0 1-1.66 0L2 12.65"/></svg>
<span id="t85" style="position:absolute;left:2137px;top:1119.14px;font-size:25.37px;line-height:25.37px;font-weight:400;color:#2c3136;white-space:nowrap;letter-spacing:0.107px;-webkit-text-stroke:0.2px #2c3136;">Default</span>
<span id="t86" style="position:absolute;left:2429px;top:1119.14px;font-size:25.37px;line-height:25.37px;font-weight:400;color:#0d0f12;white-space:nowrap;letter-spacing:0.351px;">2025/05/02 13:24:08</span>
<div style="position:absolute;left:2722px;top:1072px;width:12px;height:118px;background:linear-gradient(90deg,rgba(16,24,40,0),rgba(16,24,40,.045))"></div>
<div style="position:absolute;left:2734px;top:1072px;width:2px;height:118px;background:#e1e8ee"></div>
<svg style="position:absolute;left:2774.25px;top:1116.0px;overflow:visible" width="32.0" height="32.0" viewBox="0 0 24 24" fill="none" stroke="#4f575d" stroke-width="2.25" stroke-linecap="round" stroke-linejoin="round" color="#4f575d"><path d="m19 21-7-4-7 4V5a2 2 0 0 1 2-2h10a2 2 0 0 1 2 2v16z"/></svg>
<svg style="position:absolute;left:2847.57px;top:1116.18px;overflow:visible" width="30.13" height="30.13" viewBox="0 0 24 24" fill="none" stroke="#4f575d" stroke-width="2.31" stroke-linecap="round" stroke-linejoin="round" color="#4f575d"><circle cx="14.800" cy="7.400" r="4.400"/><path d="M11.500 15.500h5.200a4.300 4.300 0 0 1 4.300 4.300v2.200"/><path d="M2 19h7"/><path d="m5.800 15.500 3.500 3.500-3.500 3.500"/></svg>
<svg style="position:absolute;left:2931px;top:1119.5px;overflow:visible" width="6" height="25" viewBox="0 0 6 25" fill="none"  ><circle cx="3" cy="3" r="3" fill="#4f575d"/><circle cx="3" cy="12.500" r="3" fill="#4f575d"/><circle cx="3" cy="22" r="3" fill="#4f575d"/></svg>
<span id="t87" style="position:absolute;left:486.5px;top:1863.64px;font-size:25.37px;line-height:25.37px;font-weight:400;color:#2e3338;white-space:nowrap;letter-spacing:-0.297px;">Showing</span>
<span id="t88" style="position:absolute;left:590px;top:1863.64px;font-size:25.37px;line-height:25.37px;font-weight:700;color:#0d0f12;white-space:nowrap;letter-spacing:-0.117px;">11-20</span>
<span id="t89" style="position:absolute;left:662px;top:1863.64px;font-size:25.37px;line-height:25.37px;font-weight:400;color:#2e3338;white-space:nowrap;letter-spacing:-0.156px;">of</span>
<span id="t90" style="position:absolute;left:692px;top:1863.64px;font-size:25.37px;line-height:25.37px;font-weight:700;color:#0d0f12;white-space:nowrap;letter-spacing:1.594px;">300</span>
<span id="t91" style="position:absolute;left:746px;top:1863.64px;font-size:25.37px;line-height:25.37px;font-weight:400;color:#2e3338;white-space:nowrap;letter-spacing:0.025px;">profiles,</span>
<div style="position:absolute;left:850px;top:1852px;width:120px;height:48px;background:#fff;border:1.5px solid #d2d8dd;border-radius:10px;box-sizing:border-box;"></div>
<span id="t92" style="position:absolute;left:862.5px;top:1863.64px;font-size:25.37px;line-height:25.37px;font-weight:400;color:#0d0f12;white-space:nowrap;letter-spacing:-0.700px;">10</span>
<svg style="position:absolute;left:928.05px;top:1858.55px;overflow:visible" width="35.4" height="35.4" viewBox="0 0 24 24" fill="none" stroke="#6b7379" stroke-width="1.898" stroke-linecap="round" stroke-linejoin="round" color="#6b7379"><path d="m6 9 6 6 6-6"/></svg>
<span id="t93" style="position:absolute;left:983px;top:1863.64px;font-size:25.37px;line-height:25.37px;font-weight:400;color:#2e3338;white-space:nowrap;letter-spacing:0.232px;">profiles/page</span>
<span id="t94" style="position:absolute;left:2099px;top:1864.14px;font-size:25.37px;line-height:25.37px;font-weight:400;color:#2e3338;white-space:nowrap;letter-spacing:-0.508px;">Go to</span>
<div style="position:absolute;left:2178px;top:1852px;width:120px;height:48px;background:#fff;border:1.5px solid #d2d8dd;border-radius:10px;box-sizing:border-box;box-shadow:0 2px 4px rgba(16,24,40,.05)"></div>
<span id="t95" style="position:absolute;left:2191px;top:1863.64px;font-size:25.37px;line-height:25.37px;font-weight:400;color:#6b7379;white-space:nowrap;letter-spacing:-0.700px;">Page</span>
<div style="position:absolute;left:2316px;top:1861px;width:2px;height:30px;background:#cfd5da"></div>
<svg style="position:absolute;left:2342.0px;top:1860.5px;overflow:visible" width="32.0" height="32.0" viewBox="0 0 24 24" fill="none" stroke="#2e3338" stroke-width="2.25" stroke-linecap="round" stroke-linejoin="round" color="#2e3338"><path d="m15 18-6-6 6-6"/></svg>
<span id="t96" style="position:absolute;left:2413.5px;top:1863.64px;font-size:25.37px;line-height:25.37px;font-weight:400;color:#0d0f12;white-space:nowrap;letter-spacing:0.000px;-webkit-text-stroke:0.2px #0d0f12;">1</span>
<div style="position:absolute;left:2454px;top:1852px;width:48px;height:48px;background:#fff;border:1.5px solid #13a1fd;border-radius:10px;box-sizing:border-box;box-shadow:0 2px 4px rgba(16,24,40,.06)"></div>
<span id="t97" style="position:absolute;left:2471.5px;top:1863.64px;font-size:25.37px;line-height:25.37px;font-weight:400;color:#13a1fd;white-space:nowrap;letter-spacing:0.000px;-webkit-text-stroke:0.2px #13a1fd;">2</span>
<span id="t98" style="position:absolute;left:2531.5px;top:1863.64px;font-size:25.37px;line-height:25.37px;font-weight:400;color:#0d0f12;white-space:nowrap;letter-spacing:0.000px;-webkit-text-stroke:0.2px #0d0f12;">3</span>
<span id="t99" style="position:absolute;left:2591px;top:1863.64px;font-size:25.37px;line-height:25.37px;font-weight:400;color:#0d0f12;white-space:nowrap;letter-spacing:0.000px;-webkit-text-stroke:0.2px #0d0f12;">4</span>
<span id="t100" style="position:absolute;left:2648.5px;top:1863.64px;font-size:25.37px;line-height:25.37px;font-weight:400;color:#0d0f12;white-space:nowrap;letter-spacing:-0.700px;-webkit-text-stroke:0.2px #0d0f12;">...</span>
<span id="t101" style="position:absolute;left:2707px;top:1863.64px;font-size:25.37px;line-height:25.37px;font-weight:400;color:#0d0f12;white-space:nowrap;letter-spacing:-0.700px;-webkit-text-stroke:0.2px #0d0f12;">28</span>
<span id="t102" style="position:absolute;left:2773px;top:1863.64px;font-size:25.37px;line-height:25.37px;font-weight:400;color:#0d0f12;white-space:nowrap;letter-spacing:-0.219px;-webkit-text-stroke:0.2px #0d0f12;">29</span>
<span id="t103" style="position:absolute;left:2840px;top:1863.64px;font-size:25.37px;line-height:25.37px;font-weight:400;color:#0d0f12;white-space:nowrap;letter-spacing:-0.219px;-webkit-text-stroke:0.2px #0d0f12;">30</span>
<svg style="position:absolute;left:2902.5px;top:1860.5px;overflow:visible" width="32.0" height="32.0" viewBox="0 0 24 24" fill="none" stroke="#2e3338" stroke-width="2.25" stroke-linecap="round" stroke-linejoin="round" color="#2e3338"><path d="m9 18 6-6-6-6"/></svg>
</div></body></html>
